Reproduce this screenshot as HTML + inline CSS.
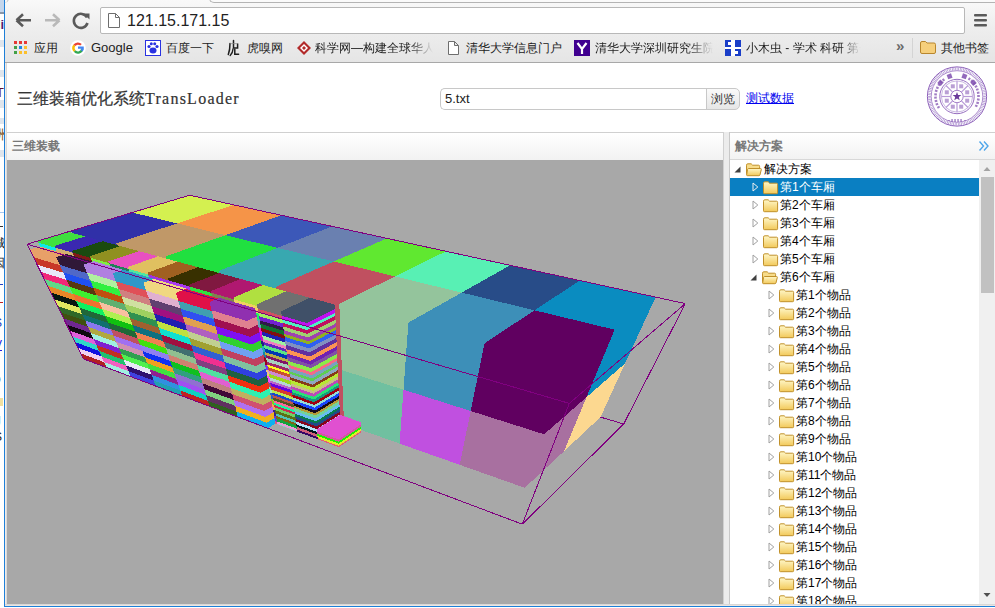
<!DOCTYPE html>
<html><head><meta charset="utf-8">
<style>
*{margin:0;padding:0;box-sizing:border-box}
html,body{width:995px;height:608px;overflow:hidden;background:#fff;font-family:"Liberation Sans",sans-serif;position:relative}
.a{position:absolute}
.bm{position:absolute;top:40px;font-size:12px;color:#222;line-height:16px;white-space:nowrap}
.row{position:absolute;height:18px;white-space:nowrap;font-size:12px;line-height:18px;color:#000}
.row .t{position:absolute;top:0}
.row svg{position:absolute}
</style></head><body>
<!-- background window strip -->
<div class="a" style="left:0;top:0;width:4px;height:608px;background:#fff;overflow:hidden">
<div class="a" style="left:0;top:0;width:4px;height:12px;background:#c4d6ec"></div>
<div class="a" style="left:0;top:12px;width:4px;height:2px;background:#8a97a8"></div>
<div class="a" style="left:0;top:40px;width:4px;height:7px;background:#dfe5ec"></div>
<div class="a" style="left:0;top:70px;width:4px;height:7px;background:#dfe5ec"></div>
<div class="a" style="left:0;top:100px;width:4px;height:8px;background:#dfe5ec"></div>
<div class="a" style="left:0;top:118px;width:4px;height:6px;background:#dfe5ec"></div>
<div class="a" style="left:0;top:150px;width:4px;height:7px;background:#dfe5ec"></div>
<div class="a" style="left:0;top:212px;width:4px;height:1px;background:#a8c8f0"></div>
<div class="a" style="left:-3px;top:18px;font-size:13px;line-height:14px;color:#502070;font-weight:bold">li</div>
<div class="a" style="left:-4px;top:86px;font-size:13px;line-height:14px;color:#601030">T</div>
<div class="a" style="left:-6px;top:128px;font-size:13px;line-height:14px;color:#805010">洲</div>
<div class="a" style="left:-7px;top:236px;font-size:12px;line-height:14px;color:#222">城</div>
<div class="a" style="left:-7px;top:256px;font-size:12px;line-height:14px;color:#222">因</div>
<div class="a" style="left:0;top:226px;width:3px;height:1px;background:#333"></div>
<div class="a" style="left:0;top:284px;width:3px;height:1px;background:#2040c0"></div>
<div class="a" style="left:0;top:302px;width:3px;height:1px;background:#c02020"></div>
<div class="a" style="left:-6px;top:316px;font-size:12px;line-height:14px;color:#2040c0">S</div>
<div class="a" style="left:-6px;top:338px;font-size:12px;line-height:14px;color:#2020e0;text-decoration:underline">V</div>
<div class="a" style="left:-6px;top:372px;font-size:12px;line-height:14px;color:#222">o</div>
<div class="a" style="left:0;top:398px;width:3px;height:8px;background:#f0e0a0"></div>
<div class="a" style="left:-6px;top:412px;font-size:12px;line-height:14px;color:#222">g</div>
<div class="a" style="left:-6px;top:430px;font-size:12px;line-height:14px;color:#222">S</div>
</div>
<div class="a" style="left:4px;top:0;width:1px;height:607px;background:#1e7fd8"></div>
<div class="a" style="left:4px;top:606px;width:991px;height:1px;background:#1e7fd8"></div>
<!-- chrome -->
<div class="a" style="left:5px;top:0;width:990px;height:62px;background:linear-gradient(#f9f9f9,#eeeeee 45%,#e5e5e5)"></div>
<div class="a" style="left:209px;top:-6px;width:800px;height:9px;border-left:1px solid #b4b4b4;border-bottom:1px solid #b4b4b4;border-bottom-left-radius:5px;background:#fafafa"></div>
<div class="a" style="left:3px;top:-6px;width:6px;height:9px;border-right:1px solid #b8b8b8;border-bottom-right-radius:5px"></div>
<svg class="a" style="left:0;top:0" width="995" height="62">
 <!-- back -->
 <path d="M16.5 20.2 L23 14.2 M16.5 20.2 L23 26.2 M17 20.2 H31" stroke="#5a5a5a" stroke-width="2.6" fill="none"/>
 <!-- forward -->
 <path d="M59.5 20.2 L53 14.2 M59.5 20.2 L53 26.2 M59 20.2 H45" stroke="#b9b9b9" stroke-width="2.6" fill="none"/>
 <!-- reload -->
 <path d="M87 17.5 A7 7 0 1 0 87.5 23" stroke="#5a5a5a" stroke-width="2.6" fill="none"/>
 <path d="M83.5 13.5 L89.5 13.5 L89.5 19.5 Z" fill="#5a5a5a"/>
 <!-- menu -->
 <rect x="974" y="14" width="13" height="2.6" rx="1" fill="#5a5a5a"/>
 <rect x="974" y="19" width="13" height="2.6" rx="1" fill="#5a5a5a"/>
 <rect x="974" y="24" width="13" height="2.6" rx="1" fill="#5a5a5a"/>
</svg>
<!-- omnibox -->
<div class="a" style="left:100px;top:7px;width:865px;height:27px;background:#fff;border:1px solid #b8b8b8;border-radius:2px"></div>
<svg class="a" style="left:107px;top:12px" width="14" height="17"><path d="M1.5 1.5 H8.5 L12.5 5.5 V15.5 H1.5 Z M8.5 1.5 V5.5 H12.5" stroke="#6e6e6e" stroke-width="1" fill="#fff"/></svg>
<div class="a" style="left:127px;top:11px;font-size:16px;line-height:19px;color:#222">121.15.171.15</div>
<!-- bookmarks -->
<svg class="a" style="left:13px;top:41px" width="15" height="14">
 <rect x="1" y="0" width="3" height="3" fill="#e53935"/><rect x="6" y="0" width="3" height="3" fill="#e53935"/><rect x="11" y="0" width="3" height="3" fill="#e53935"/>
 <rect x="1" y="5" width="3" height="3" fill="#43a047"/><rect x="6" y="5" width="3" height="3" fill="#1e88e5"/><rect x="11" y="5" width="3" height="3" fill="#fbc02d"/>
 <rect x="1" y="10" width="3" height="3" fill="#43a047"/><rect x="6" y="10" width="3" height="3" fill="#fbc02d"/><rect x="11" y="10" width="3" height="3" fill="#fbc02d"/>
</svg>
<div class="bm" style="left:34px">应用</div>
<svg class="a" style="left:70px;top:40px" width="16" height="16">
 <circle cx="8" cy="8" r="7.8" fill="#fff"/>
 <path d="M12.3 8.6 A4.4 4.4 0 0 1 4.6 11" stroke="#34a853" stroke-width="2.3" fill="none"/>
 <path d="M4.6 11 A4.4 4.4 0 0 1 4.4 5.3" stroke="#fbbc05" stroke-width="2.3" fill="none"/>
 <path d="M4.4 5.3 A4.4 4.4 0 0 1 11 4.8" stroke="#ea4335" stroke-width="2.3" fill="none"/>
 <path d="M8 7.6 H12.6 V9 A4.4 4.4 0 0 1 11.6 10.8" stroke="#4285f4" stroke-width="2.3" fill="none"/>
</svg>
<div class="bm" style="left:91px;font-size:13px">Google</div>
<svg class="a" style="left:145px;top:40px" width="16" height="16">
 <rect x="0.5" y="0.5" width="15" height="15" fill="#fff" stroke="#2932e1"/>
 <ellipse cx="8" cy="10.5" rx="3.5" ry="3" fill="#2932e1"/>
 <circle cx="4" cy="6.5" r="1.6" fill="#2932e1"/><circle cx="12" cy="6.5" r="1.6" fill="#2932e1"/>
 <circle cx="6.3" cy="3.8" r="1.5" fill="#2932e1"/><circle cx="9.7" cy="3.8" r="1.5" fill="#2932e1"/>
</svg>
<div class="bm" style="left:166px">百度一下</div>
<svg class="a" style="left:222px;top:36px" width="24" height="24"><g fill="none" stroke="#1e1e1e" stroke-linecap="round"><path d="M8 7.5 C8 11 7.6 15 6.3 18.5" stroke-width="1.5"/><path d="M11.5 4.5 V12 H15.6 V8" stroke-width="1.5"/><path d="M8.5 7.6 H15.8" stroke-width="0.7" stroke="#888"/><path d="M11 13 C10.8 16 9.8 18 8.2 19.5" stroke-width="1.4"/><path d="M12.8 13.3 V18.2 H16.6" stroke-width="1.5"/></g></svg>
<div class="bm" style="left:247px">虎嗅网</div>
<svg class="a" style="left:296px;top:40px" width="16" height="16">
 <path d="M8 1 L15 8 L8 15 L1 8 Z" fill="#b22a2a"/><path d="M8 4 L12 8 L8 12 L4 8 Z" fill="#fff"/><path d="M8 6 L10 8 L8 10 L6 8 Z" fill="#b22a2a"/>
</svg>
<div class="bm" style="left:315px;width:118px;overflow:hidden;-webkit-mask-image:linear-gradient(90deg,#000 80%,transparent)">科学网—构建全球华人</div>
<svg class="a" style="left:447px;top:40px" width="13" height="16"><path d="M1.5 1.5 H7.5 L11.5 5.5 V14.5 H1.5 Z M7.5 1.5 V5.5 H11.5" stroke="#6e6e6e" stroke-width="1" fill="#fff"/></svg>
<div class="bm" style="left:466px">清华大学信息门户</div>
<svg class="a" style="left:574px;top:40px" width="16" height="16"><rect width="16" height="16" fill="#400090"/><path d="M3.5 3 L8 9 L12.5 3 M8 9 V14" stroke="#fff" stroke-width="2.2" fill="none"/></svg>
<div class="bm" style="left:595px;width:118px;overflow:hidden;-webkit-mask-image:linear-gradient(90deg,#000 80%,transparent)">清华大学深圳研究生院</div>
<svg class="a" style="left:725px;top:40px" width="16" height="16"><rect width="16" height="16" fill="#fff"/><rect x="0" y="0" width="16" height="7" fill="#1a3ec8"/><rect x="0" y="9" width="16" height="7" fill="#1a3ec8"/><rect x="6" y="0" width="4" height="16" fill="#fff"/><rect x="3" y="2" width="3" height="3" fill="#fff"/><rect x="10" y="11" width="3" height="3" fill="#fff"/></svg>
<div class="bm" style="left:746px;width:115px;overflow:hidden;-webkit-mask-image:linear-gradient(90deg,#000 82%,transparent)">小木虫 - 学术 科研 第一站</div>
<div class="bm" style="left:896px;top:38px;font-size:15px;color:#6a6a6a;font-weight:bold">»</div>
<div class="a" style="left:912px;top:38px;width:1px;height:20px;background:#d4d4d4"></div>
<svg class="a" style="left:920px;top:41px" width="16" height="13"><path d="M0.5 2 Q0.5 0.5 2 0.5 H5.5 L7 2 H14 Q15.5 2 15.5 3.5 V11 Q15.5 12.5 14 12.5 H2 Q0.5 12.5 0.5 11 Z" fill="#f6cf7c" stroke="#b8862e"/></svg>
<div class="bm" style="left:941px">其他书签</div>
<div class="a" style="left:5px;top:62px;width:990px;height:1px;background:#a8a8a8"></div>
<!-- page -->
<div class="a" style="left:5px;top:63px;width:1px;height:543px;background:#f0ebe6"></div>
<div class="a" style="left:6px;top:63px;width:1px;height:543px;background:#d9d9d9"></div>
<div class="a" style="left:17px;top:90px;font-size:16px;line-height:18px;color:#333;white-space:nowrap;-webkit-text-stroke:0.2px #333">三维装箱优化系统<span style="font-family:'Liberation Serif',serif;font-size:16px;letter-spacing:1.25px">TransLoader</span></div>
<div class="a" style="left:440px;top:88px;width:267px;height:22px;border:1px solid #c8c8c8;border-right:none;border-radius:5px 0 0 5px;background:#fff"></div>
<div class="a" style="left:445px;top:91px;font-size:13px;line-height:16px;color:#222">5.txt</div>
<div class="a" style="left:706px;top:88px;width:34px;height:22px;border:1px solid #c8c8c8;border-radius:0 5px 5px 0;background:linear-gradient(#fafafa,#e6e6e6)"></div>
<div class="a" style="left:711px;top:91px;font-size:12px;line-height:16px;color:#333">浏览</div>
<div class="a" style="left:746px;top:90px;font-size:12px;line-height:16px;color:#0000ee;text-decoration:underline">测试数据</div>
<!-- logo -->
<svg class="a" style="left:925px;top:65px" width="64" height="64"><g fill="none" stroke="#8a5cb8"><circle cx="32" cy="31.5" r="29.6" stroke-width="1"/><circle cx="32" cy="31.5" r="27.6" stroke-width="2.6" stroke-dasharray="0.7 0.9" stroke="#a688cc"/><circle cx="32" cy="31.5" r="25.8" stroke-width="0.7"/><circle cx="32" cy="31.5" r="17.2" stroke-width="0.9"/><circle cx="32" cy="31.5" r="15.6" stroke-width="0.6" stroke="#a688cc"/><circle cx="32" cy="31.5" r="6.2" stroke-width="0.8"/><line x1="38.2" y1="31.5" x2="47.6" y2="31.5" stroke-width="1.2" stroke="#b89ad8"/><line x1="36.4" y1="35.9" x2="43.0" y2="42.5" stroke-width="1.2" stroke="#b89ad8"/><line x1="32.0" y1="37.7" x2="32.0" y2="47.1" stroke-width="1.2" stroke="#b89ad8"/><line x1="27.6" y1="35.9" x2="21.0" y2="42.5" stroke-width="1.2" stroke="#b89ad8"/><line x1="25.8" y1="31.5" x2="16.4" y2="31.5" stroke-width="1.2" stroke="#b89ad8"/><line x1="27.6" y1="27.1" x2="21.0" y2="20.5" stroke-width="1.2" stroke="#b89ad8"/><line x1="32.0" y1="25.3" x2="32.0" y2="15.9" stroke-width="1.2" stroke="#b89ad8"/><line x1="36.4" y1="27.1" x2="43.0" y2="20.5" stroke-width="1.2" stroke="#b89ad8"/></g><g fill="#8050b0"><rect x="13.2" y="15.4" width="4.6" height="4.6" transform="rotate(-50 15.5 17.7)" opacity="0.85"/><rect x="22.3" y="9.0" width="4.6" height="4.6" transform="rotate(-20 24.6 11.3)" opacity="0.85"/><rect x="37.1" y="9.0" width="4.6" height="4.6" transform="rotate(20 39.4 11.3)" opacity="0.85"/><rect x="46.2" y="15.4" width="4.6" height="4.6" transform="rotate(50 48.5 17.7)" opacity="0.85"/><rect x="12.4" y="41.0" width="2" height="2.6" transform="rotate(240 13.4 42.2)" opacity="0.75"/><rect x="10.9" y="37.9" width="2" height="2.6" transform="rotate(249 11.9 39.2)" opacity="0.75"/><rect x="10.0" y="34.7" width="2" height="2.6" transform="rotate(258 11.0 36.0)" opacity="0.75"/><rect x="9.5" y="31.3" width="2" height="2.6" transform="rotate(267 10.5 32.6)" opacity="0.75"/><rect x="9.6" y="28.0" width="2" height="2.6" transform="rotate(276 10.6 29.3)" opacity="0.75"/><rect x="10.2" y="24.6" width="2" height="2.6" transform="rotate(285 11.2 25.9)" opacity="0.75"/><rect x="11.4" y="21.5" width="2" height="2.6" transform="rotate(294 12.4 22.8)" opacity="0.75"/><rect x="13.0" y="18.5" width="2" height="2.6" transform="rotate(303 14.0 19.8)" opacity="0.75"/><rect x="15.0" y="15.8" width="2" height="2.6" transform="rotate(312 16.0 17.1)" opacity="0.75"/><rect x="17.5" y="13.5" width="2" height="2.6" transform="rotate(321 18.5 14.8)" opacity="0.75"/><rect x="43.3" y="12.6" width="2" height="2.6" transform="rotate(35 44.3 13.9)" opacity="0.75"/><rect x="45.9" y="14.7" width="2" height="2.6" transform="rotate(44 46.9 16.0)" opacity="0.75"/><rect x="48.2" y="17.3" width="2" height="2.6" transform="rotate(53 49.2 18.6)" opacity="0.75"/><rect x="50.0" y="20.1" width="2" height="2.6" transform="rotate(62 51.0 21.4)" opacity="0.75"/><rect x="51.3" y="23.2" width="2" height="2.6" transform="rotate(71 52.3 24.5)" opacity="0.75"/><rect x="52.2" y="26.5" width="2" height="2.6" transform="rotate(80 53.2 27.8)" opacity="0.75"/><rect x="52.5" y="29.8" width="2" height="2.6" transform="rotate(89 53.5 31.1)" opacity="0.75"/><rect x="52.3" y="33.2" width="2" height="2.6" transform="rotate(98 53.3 34.5)" opacity="0.75"/><rect x="51.6" y="36.5" width="2" height="2.6" transform="rotate(107 52.6 37.8)" opacity="0.75"/><rect x="50.3" y="39.6" width="2" height="2.6" transform="rotate(116 51.3 40.9)" opacity="0.75"/><rect x="26.4" y="54.0" width="1.3" height="3" opacity="0.8"/><rect x="29.4" y="54.0" width="1.3" height="3" opacity="0.8"/><rect x="32.4" y="54.0" width="1.3" height="3" opacity="0.8"/><rect x="35.4" y="54.0" width="1.3" height="3" opacity="0.8"/><rect x="23.0" y="55.0" width="2" height="0.8" opacity="0.7"/><rect x="39.0" y="55.0" width="2" height="0.8" opacity="0.7"/><rect x="40.2" y="33.7" width="4" height="4" opacity="0.55"/><rect x="34.2" y="39.7" width="4" height="4" opacity="0.55"/><rect x="25.8" y="39.7" width="4" height="4" opacity="0.55"/><rect x="19.8" y="33.7" width="4" height="4" opacity="0.55"/><rect x="19.8" y="25.3" width="4" height="4" opacity="0.55"/><rect x="25.8" y="19.3" width="4" height="4" opacity="0.55"/><rect x="34.2" y="19.3" width="4" height="4" opacity="0.55"/><rect x="40.2" y="25.3" width="4" height="4" opacity="0.55"/><polygon points="32.0,26.9 33.1,30.0 36.4,30.1 33.8,32.1 34.7,35.2 32.0,33.4 29.3,35.2 30.2,32.1 27.6,30.1 30.9,30.0" fill="#6a3a9a"/></g></svg>
<!-- panel headers -->
<div class="a" style="left:7px;top:132px;width:716px;height:28px;border-top:1px solid #d0d0d0;background:linear-gradient(#ffffff,#f2f2f2)"></div>
<div class="a" style="left:12px;top:139px;font-size:12px;line-height:14px;color:#777;font-weight:bold">三维装载</div>
<div class="a" style="left:723px;top:132px;width:1px;height:474px;background:#d0d0d0"></div>
<div class="a" style="left:724px;top:132px;width:5px;height:474px;background:#ececec"></div>
<div class="a" style="left:729px;top:132px;width:1px;height:474px;background:#c8c8c8"></div>
<div class="a" style="left:730px;top:132px;width:265px;height:28px;border-top:1px solid #d0d0d0;border-bottom:1px solid #d8d8d8;background:linear-gradient(#ffffff,#f2f2f2)"></div>
<div class="a" style="left:735px;top:139px;font-size:12px;line-height:14px;color:#777;font-weight:bold">解决方案</div>
<svg class="a" style="left:978px;top:140px" width="12" height="12"><path d="M1.5 1.5 L5.5 6 L1.5 10.5 M6 1.5 L10 6 L6 10.5" stroke="#4ea6ea" stroke-width="1.4" fill="none"/></svg>
<!-- canvas -->
<!--scene--><svg class="a" style="left:7px;top:160px" width="716" height="444" viewBox="0 0 716 444" shape-rendering="crispEdges">
<rect width="716" height="444" fill="#a8a8a8"/>
<line x1="208.1" y1="142.9" x2="616.7" y2="264.0" stroke="#800080" stroke-width="1"/>
<line x1="208.1" y1="142.9" x2="182.6" y2="35.2" stroke="#800080" stroke-width="1"/>
<line x1="208.1" y1="142.9" x2="76.4" y2="198.8" stroke="#800080" stroke-width="1"/>
<polygon points="125.2,52.5 170.1,63.4 199.7,175.5 160.8,163.0" fill="#d4f050"/>
<polygon points="226.8,44.9 170.1,63.4 199.7,175.5 246.4,154.2" fill="#d4f050"/>
<polygon points="182.6,35.2 226.8,44.9 170.1,63.4 125.2,52.5" fill="#d4f050"/>
<polygon points="170.1,63.4 218.4,75.2 241.1,188.9 199.7,175.5" fill="#f59448"/>
<polygon points="274.2,55.3 218.4,75.2 241.1,188.9 287.1,166.3" fill="#f59448"/>
<polygon points="226.8,44.9 274.2,55.3 218.4,75.2 170.1,63.4" fill="#f59448"/>
<polygon points="218.4,75.2 270.5,87.8 285.1,203.2 241.1,188.9" fill="#3c58b8"/>
<polygon points="325.1,66.4 270.5,87.8 285.1,203.2 330.2,179.1" fill="#3c58b8"/>
<polygon points="274.2,55.3 325.1,66.4 270.5,87.8 218.4,75.2" fill="#3c58b8"/>
<polygon points="270.5,87.8 326.8,101.5 332.1,218.4 285.1,203.2" fill="#6a80b0"/>
<polygon points="379.9,78.4 326.8,101.5 332.1,218.4 376.1,192.7" fill="#6a80b0"/>
<polygon points="325.1,66.4 379.9,78.4 326.8,101.5 270.5,87.8" fill="#6a80b0"/>
<polygon points="326.8,101.5 388.0,116.4 382.5,234.6 332.1,218.4" fill="#60e830"/>
<polygon points="439.0,91.3 388.0,116.4 382.5,234.6 425.1,207.2" fill="#60e830"/>
<polygon points="379.9,78.4 439.0,91.3 388.0,116.4 326.8,101.5" fill="#60e830"/>
<polygon points="388.0,116.4 454.7,132.6 436.4,252.1 382.5,234.6" fill="#58f0b4"/>
<polygon points="503.1,105.3 454.7,132.6 436.4,252.1 477.4,222.7" fill="#58f0b4"/>
<polygon points="439.0,91.3 503.1,105.3 454.7,132.6 388.0,116.4" fill="#58f0b4"/>
<polygon points="454.7,132.6 527.5,150.3 494.5,270.8 436.4,252.1" fill="#284c88"/>
<polygon points="572.7,120.6 527.5,150.3 494.5,270.8 533.4,239.3" fill="#284c88"/>
<polygon points="503.1,105.3 572.7,120.6 527.5,150.3 454.7,132.6" fill="#284c88"/>
<polygon points="509.2,217.1 579.5,237.2 557.1,291.1 494.5,270.8" fill="#fcd890"/>
<polygon points="618.1,203.4 579.5,237.2 557.1,291.1 593.5,257.1" fill="#fcd890"/>
<polygon points="551.0,185.9 618.1,203.4 579.5,237.2 509.2,217.1" fill="#fcd890"/>
<polygon points="527.5,150.3 607.6,169.7 579.5,237.2 509.2,217.1" fill="#0a8cc0"/>
<polygon points="648.6,137.2 607.6,169.7 579.5,237.2 618.1,203.4" fill="#0a8cc0"/>
<polygon points="572.7,120.6 648.6,137.2 607.6,169.7 527.5,150.3" fill="#0a8cc0"/>
<polygon points="63.9,71.0 109.3,83.3 150.6,197.9 111.3,184.0" fill="#3030a8"/>
<polygon points="170.1,63.4 109.3,83.3 150.6,197.9 199.7,175.5" fill="#3030a8"/>
<polygon points="125.2,52.5 170.1,63.4 109.3,83.3 63.9,71.0" fill="#3030a8"/>
<polygon points="109.3,83.3 158.3,96.6 192.6,212.8 150.6,197.9" fill="#c09868"/>
<polygon points="218.4,75.2 158.3,96.6 192.6,212.8 241.1,188.9" fill="#c09868"/>
<polygon points="170.1,63.4 218.4,75.2 158.3,96.6 109.3,83.3" fill="#c09868"/>
<polygon points="158.3,96.6 211.4,111.0 237.4,228.6 192.6,212.8" fill="#20e040"/>
<polygon points="270.5,87.8 211.4,111.0 237.4,228.6 285.1,203.2" fill="#20e040"/>
<polygon points="218.4,75.2 270.5,87.8 211.4,111.0 158.3,96.6" fill="#20e040"/>
<polygon points="211.4,111.0 269.2,126.7 285.4,245.6 237.4,228.6" fill="#38a8b0"/>
<polygon points="326.8,101.5 269.2,126.7 285.4,245.6 332.1,218.4" fill="#38a8b0"/>
<polygon points="270.5,87.8 326.8,101.5 269.2,126.7 211.4,111.0" fill="#38a8b0"/>
<polygon points="269.2,126.7 332.3,143.8 337.0,263.9 285.4,245.6" fill="#c05060"/>
<polygon points="388.0,116.4 332.3,143.8 337.0,263.9 382.5,234.6" fill="#c05060"/>
<polygon points="326.8,101.5 388.0,116.4 332.3,143.8 269.2,126.7" fill="#c05060"/>
<polygon points="334.9,210.2 396.5,229.7 392.6,283.6 337.0,263.9" fill="#70c0a0"/>
<polygon points="444.6,198.5 396.5,229.7 392.6,283.6 436.4,252.1" fill="#70c0a0"/>
<polygon points="385.0,181.4 444.6,198.5 396.5,229.7 334.9,210.2" fill="#70c0a0"/>
<polygon points="332.3,143.8 401.4,162.6 396.5,229.7 334.9,210.2" fill="#94c49c"/>
<polygon points="454.7,132.6 401.4,162.6 396.5,229.7 444.6,198.5" fill="#94c49c"/>
<polygon points="388.0,116.4 454.7,132.6 401.4,162.6 332.3,143.8" fill="#94c49c"/>
<polygon points="396.5,229.7 463.7,251.0 452.7,304.8 392.6,283.6" fill="#c050e0"/>
<polygon points="509.2,217.1 463.7,251.0 452.7,304.8 494.5,270.8" fill="#c050e0"/>
<polygon points="444.6,198.5 509.2,217.1 463.7,251.0 396.5,229.7" fill="#c050e0"/>
<polygon points="401.4,162.6 477.6,183.2 463.7,251.0 396.5,229.7" fill="#3d8fb8"/>
<polygon points="527.5,150.3 477.6,183.2 463.7,251.0 509.2,217.1" fill="#3d8fb8"/>
<polygon points="454.7,132.6 527.5,150.3 477.6,183.2 401.4,162.6" fill="#3d8fb8"/>
<polygon points="463.7,251.0 537.1,274.3 517.7,327.8 452.7,304.8" fill="#a870a0"/>
<polygon points="579.5,237.2 537.1,274.3 517.7,327.8 557.1,291.1" fill="#a870a0"/>
<polygon points="509.2,217.1 579.5,237.2 537.1,274.3 463.7,251.0" fill="#a870a0"/>
<polygon points="477.6,183.2 561.8,206.1 537.1,274.3 463.7,251.0" fill="#600060"/>
<polygon points="607.6,169.7 561.8,206.1 537.1,274.3 579.5,237.2" fill="#600060"/>
<polygon points="527.5,150.3 607.6,169.7 561.8,206.1 477.6,183.2" fill="#600060"/>
<polygon points="30.5,81.0 47.4,85.9 48.2,87.6 31.3,82.7" fill="#40e040"/>
<polygon points="78.1,76.4 47.4,85.9 48.2,87.6 78.7,78.1" fill="#40e040"/>
<polygon points="31.3,82.7 48.2,87.6 51.1,94.1 34.3,89.2" fill="#10e8e8"/>
<polygon points="78.7,78.1 48.2,87.6 51.1,94.1 81.3,84.5" fill="#10e8e8"/>
<polygon points="34.3,89.2 51.1,94.1 54.3,101.2 37.6,96.2" fill="#a54dca"/>
<polygon points="81.3,84.5 51.1,94.1 54.3,101.2 84.1,91.5" fill="#a54dca"/>
<polygon points="37.6,96.2 54.3,101.2 56.8,106.6 40.2,101.6" fill="#30bb1d"/>
<polygon points="84.1,91.5 54.3,101.2 56.8,106.6 86.3,96.8" fill="#30bb1d"/>
<polygon points="40.2,101.6 56.8,106.6 60.2,114.1 43.7,109.0" fill="#6d132c"/>
<polygon points="86.3,96.8 56.8,106.6 60.2,114.1 89.2,104.2" fill="#6d132c"/>
<polygon points="43.7,109.0 60.2,114.1 62.9,120.2 46.6,115.1" fill="#237b2e"/>
<polygon points="89.2,104.2 60.2,114.1 62.9,120.2 91.7,110.3" fill="#237b2e"/>
<polygon points="46.6,115.1 62.9,120.2 65.8,126.5 49.6,121.3" fill="#1e3f72"/>
<polygon points="91.7,110.3 62.9,120.2 65.8,126.5 94.2,116.5" fill="#1e3f72"/>
<polygon points="49.6,121.3 65.8,126.5 68.7,132.9 52.6,127.7" fill="#1fcb19"/>
<polygon points="94.2,116.5 65.8,126.5 68.7,132.9 96.7,122.8" fill="#1fcb19"/>
<polygon points="52.6,127.7 68.7,132.9 71.9,139.9 55.9,134.7" fill="#174494"/>
<polygon points="96.7,122.8 68.7,132.9 71.9,139.9 99.5,129.8" fill="#174494"/>
<polygon points="55.9,134.7 71.9,139.9 74.4,145.5 58.5,140.3" fill="#3c9d5c"/>
<polygon points="99.5,129.8 71.9,139.9 74.4,145.5 101.7,135.3" fill="#3c9d5c"/>
<polygon points="58.5,140.3 74.4,145.5 76.6,150.4 60.8,145.1" fill="#60be31"/>
<polygon points="101.7,135.3 74.4,145.5 76.6,150.4 103.6,140.1" fill="#60be31"/>
<polygon points="60.8,145.1 76.6,150.4 79.2,156.1 63.5,150.7" fill="#201e69"/>
<polygon points="103.6,140.1 76.6,150.4 79.2,156.1 105.9,145.8" fill="#201e69"/>
<polygon points="63.5,150.7 79.2,156.1 81.6,161.6 66.1,156.2" fill="#daa0ee"/>
<polygon points="105.9,145.8 79.2,156.1 81.6,161.6 108.1,151.2" fill="#daa0ee"/>
<polygon points="66.1,156.2 81.6,161.6 84.2,167.2 68.7,161.8" fill="#e8b999"/>
<polygon points="108.1,151.2 81.6,161.6 84.2,167.2 110.3,156.8" fill="#e8b999"/>
<polygon points="68.7,161.8 84.2,167.2 86.3,172.0 71.0,166.6" fill="#5c7c29"/>
<polygon points="110.3,156.8 84.2,167.2 86.3,172.0 112.3,161.5" fill="#5c7c29"/>
<polygon points="71.0,166.6 86.3,172.0 88.8,177.4 73.5,171.9" fill="#fdafe5"/>
<polygon points="112.3,161.5 86.3,172.0 88.8,177.4 114.4,166.9" fill="#fdafe5"/>
<polygon points="73.5,171.9 88.8,177.4 90.9,182.1 75.7,176.6" fill="#253cd6"/>
<polygon points="114.4,166.9 88.8,177.4 90.9,182.1 116.3,171.5" fill="#253cd6"/>
<polygon points="75.7,176.6 90.9,182.1 92.9,186.4 77.8,181.0" fill="#af4dfa"/>
<polygon points="116.3,171.5 90.9,182.1 92.9,186.4 118.0,175.9" fill="#af4dfa"/>
<polygon points="77.8,181.0 92.9,186.4 95.1,191.3 80.1,185.8" fill="#27a0ae"/>
<polygon points="118.0,175.9 92.9,186.4 95.1,191.3 120.0,180.7" fill="#27a0ae"/>
<polygon points="80.1,185.8 95.1,191.3 97.5,196.6 82.6,191.1" fill="#fee923"/>
<polygon points="120.0,180.7 95.1,191.3 97.5,196.6 122.1,185.9" fill="#fee923"/>
<polygon points="82.6,191.1 97.5,196.6 99.4,200.9 84.6,195.4" fill="#8af221"/>
<polygon points="122.1,185.9 97.5,196.6 99.4,200.9 123.8,190.2" fill="#8af221"/>
<polygon points="61.1,71.8 78.1,76.4 47.4,85.9 30.5,81.0" fill="#40e040"/>
<polygon points="47.4,85.9 64.9,91.0 65.6,92.6 48.2,87.6" fill="#3a28b0"/>
<polygon points="95.5,81.2 64.9,91.0 65.6,92.6 96.1,82.8" fill="#3a28b0"/>
<polygon points="48.2,87.6 65.6,92.6 68.5,99.2 51.1,94.1" fill="#d0b070"/>
<polygon points="96.1,82.8 65.6,92.6 68.5,99.2 98.6,89.3" fill="#d0b070"/>
<polygon points="51.1,94.1 68.5,99.2 71.1,105.4 53.9,100.2" fill="#1f9ee4"/>
<polygon points="98.6,89.3 68.5,99.2 71.1,105.4 100.9,95.4" fill="#1f9ee4"/>
<polygon points="53.9,100.2 71.1,105.4 73.8,111.7 56.7,106.5" fill="#b10bec"/>
<polygon points="100.9,95.4 71.1,105.4 73.8,111.7 103.2,101.6" fill="#b10bec"/>
<polygon points="56.7,106.5 73.8,111.7 76.4,117.8 59.5,112.6" fill="#3bfc1e"/>
<polygon points="103.2,101.6 73.8,111.7 76.4,117.8 105.5,107.6" fill="#3bfc1e"/>
<polygon points="59.5,112.6 76.4,117.8 78.9,123.4 62.0,118.2" fill="#93427e"/>
<polygon points="105.5,107.6 76.4,117.8 78.9,123.4 107.6,113.2" fill="#93427e"/>
<polygon points="62.0,118.2 78.9,123.4 81.4,129.4 64.7,124.1" fill="#fe2955"/>
<polygon points="107.6,113.2 78.9,123.4 81.4,129.4 109.9,119.1" fill="#fe2955"/>
<polygon points="64.7,124.1 81.4,129.4 84.0,135.4 67.4,130.1" fill="#8e46dc"/>
<polygon points="109.9,119.1 81.4,129.4 84.0,135.4 112.2,125.1" fill="#8e46dc"/>
<polygon points="67.4,130.1 84.0,135.4 87.0,142.3 70.5,136.9" fill="#8ed4b7"/>
<polygon points="112.2,125.1 84.0,135.4 87.0,142.3 114.7,131.9" fill="#8ed4b7"/>
<polygon points="70.5,136.9 87.0,142.3 89.7,148.6 73.3,143.2" fill="#c2764d"/>
<polygon points="114.7,131.9 87.0,142.3 89.7,148.6 117.1,138.2" fill="#c2764d"/>
<polygon points="73.3,143.2 89.7,148.6 91.8,153.5 75.5,148.0" fill="#4d7677"/>
<polygon points="117.1,138.2 89.7,148.6 91.8,153.5 118.9,142.9" fill="#4d7677"/>
<polygon points="75.5,148.0 91.8,153.5 93.7,158.0 77.6,152.6" fill="#5d8690"/>
<polygon points="118.9,142.9 91.8,153.5 93.7,158.0 120.6,147.5" fill="#5d8690"/>
<polygon points="77.6,152.6 93.7,158.0 95.7,162.5 79.6,157.1" fill="#d6bda3"/>
<polygon points="120.6,147.5 93.7,158.0 95.7,162.5 122.3,151.9" fill="#d6bda3"/>
<polygon points="79.6,157.1 95.7,162.5 98.5,169.0 82.5,163.5" fill="#1be9c8"/>
<polygon points="122.3,151.9 95.7,162.5 98.5,169.0 124.8,158.4" fill="#1be9c8"/>
<polygon points="82.5,163.5 98.5,169.0 100.7,174.2 84.9,168.7" fill="#c935f6"/>
<polygon points="124.8,158.4 98.5,169.0 100.7,174.2 126.7,163.5" fill="#c935f6"/>
<polygon points="84.9,168.7 100.7,174.2 103.1,179.8 87.4,174.3" fill="#1f6122"/>
<polygon points="126.7,163.5 100.7,174.2 103.1,179.8 128.8,169.1" fill="#1f6122"/>
<polygon points="87.4,174.3 103.1,179.8 105.8,186.0 90.2,180.5" fill="#e15338"/>
<polygon points="128.8,169.1 103.1,179.8 105.8,186.0 131.2,175.2" fill="#e15338"/>
<polygon points="90.2,180.5 105.8,186.0 107.8,190.8 92.3,185.2" fill="#1a3400"/>
<polygon points="131.2,175.2 105.8,186.0 107.8,190.8 133.0,180.0" fill="#1a3400"/>
<polygon points="92.3,185.2 107.8,190.8 110.1,196.0 94.7,190.4" fill="#33ba0d"/>
<polygon points="133.0,180.0 107.8,190.8 110.1,196.0 134.9,185.1" fill="#33ba0d"/>
<polygon points="94.7,190.4 110.1,196.0 111.8,200.1 96.5,194.4" fill="#6ac04c"/>
<polygon points="134.9,185.1 110.1,196.0 111.8,200.1 136.5,189.2" fill="#6ac04c"/>
<polygon points="96.5,194.4 111.8,200.1 114.0,205.2 98.8,199.5" fill="#b1baf2"/>
<polygon points="136.5,189.2 111.8,200.1 114.0,205.2 138.4,194.3" fill="#b1baf2"/>
<polygon points="98.8,199.5 114.0,205.2 114.6,206.5 99.4,200.9" fill="#f9eef5"/>
<polygon points="138.4,194.3 114.0,205.2 114.6,206.5 138.9,195.6" fill="#f9eef5"/>
<polygon points="78.1,76.4 95.5,81.2 64.9,91.0 47.4,85.9" fill="#3a28b0"/>
<polygon points="64.9,91.0 82.9,96.2 83.6,97.9 65.6,92.6" fill="#1a4a10"/>
<polygon points="113.5,86.1 82.9,96.2 83.6,97.9 114.0,87.7" fill="#1a4a10"/>
<polygon points="65.6,92.6 83.6,97.9 86.3,104.5 68.5,99.2" fill="#801818"/>
<polygon points="114.0,87.7 83.6,97.9 86.3,104.5 116.4,94.3" fill="#801818"/>
<polygon points="68.5,99.2 86.3,104.5 88.7,110.3 71.0,105.0" fill="#f79f2b"/>
<polygon points="116.4,94.3 86.3,104.5 88.7,110.3 118.4,100.0" fill="#f79f2b"/>
<polygon points="71.0,105.0 88.7,110.3 91.7,117.6 74.1,112.3" fill="#87f552"/>
<polygon points="118.4,100.0 88.7,110.3 91.7,117.6 121.0,107.2" fill="#87f552"/>
<polygon points="74.1,112.3 91.7,117.6 94.3,124.2 76.9,118.8" fill="#69b94b"/>
<polygon points="121.0,107.2 91.7,117.6 94.3,124.2 123.3,113.7" fill="#69b94b"/>
<polygon points="76.9,118.8 94.3,124.2 97.1,131.0 79.8,125.6" fill="#0d982e"/>
<polygon points="123.3,113.7 94.3,124.2 97.1,131.0 125.7,120.5" fill="#0d982e"/>
<polygon points="79.8,125.6 97.1,131.0 99.8,137.7 82.7,132.3" fill="#85bb55"/>
<polygon points="125.7,120.5 97.1,131.0 99.8,137.7 128.1,127.1" fill="#85bb55"/>
<polygon points="82.7,132.3 99.8,137.7 102.2,143.5 85.1,138.0" fill="#72a872"/>
<polygon points="128.1,127.1 99.8,137.7 102.2,143.5 130.1,132.8" fill="#72a872"/>
<polygon points="85.1,138.0 102.2,143.5 104.7,149.8 87.8,144.2" fill="#637acd"/>
<polygon points="130.1,132.8 102.2,143.5 104.7,149.8 132.3,139.0" fill="#637acd"/>
<polygon points="87.8,144.2 104.7,149.8 107.4,156.2 90.6,150.6" fill="#7466fc"/>
<polygon points="132.3,139.0 104.7,149.8 107.4,156.2 134.6,145.4" fill="#7466fc"/>
<polygon points="90.6,150.6 107.4,156.2 109.6,161.7 92.9,156.1" fill="#0e0e8f"/>
<polygon points="134.6,145.4 107.4,156.2 109.6,161.7 136.5,150.8" fill="#0e0e8f"/>
<polygon points="92.9,156.1 109.6,161.7 111.8,167.3 95.3,161.6" fill="#63b0e4"/>
<polygon points="136.5,150.8 109.6,161.7 111.8,167.3 138.5,156.4" fill="#63b0e4"/>
<polygon points="95.3,161.6 111.8,167.3 114.4,173.5 98.0,167.8" fill="#b2ba29"/>
<polygon points="138.5,156.4 111.8,167.3 114.4,173.5 140.7,162.6" fill="#b2ba29"/>
<polygon points="98.0,167.8 114.4,173.5 116.3,178.3 100.0,172.7" fill="#74f064"/>
<polygon points="140.7,162.6 114.4,173.5 116.3,178.3 142.4,167.4" fill="#74f064"/>
<polygon points="100.0,172.7 116.3,178.3 118.4,183.3 102.2,177.7" fill="#f700f5"/>
<polygon points="142.4,167.4 116.3,178.3 118.4,183.3 144.2,172.3" fill="#f700f5"/>
<polygon points="102.2,177.7 118.4,183.3 120.9,189.5 104.8,183.8" fill="#b02b3d"/>
<polygon points="144.2,172.3 118.4,183.3 120.9,189.5 146.3,178.4" fill="#b02b3d"/>
<polygon points="104.8,183.8 120.9,189.5 123.3,195.5 107.4,189.7" fill="#66f45b"/>
<polygon points="146.3,178.4 120.9,189.5 123.3,195.5 148.4,184.4" fill="#66f45b"/>
<polygon points="107.4,189.7 123.3,195.5 125.3,200.4 109.5,194.6" fill="#aa2cca"/>
<polygon points="148.4,184.4 123.3,195.5 125.3,200.4 150.2,189.3" fill="#aa2cca"/>
<polygon points="109.5,194.6 125.3,200.4 127.3,205.3 111.6,199.5" fill="#2b5157"/>
<polygon points="150.2,189.3 125.3,200.4 127.3,205.3 151.9,194.1" fill="#2b5157"/>
<polygon points="111.6,199.5 127.3,205.3 129.7,211.1 114.1,205.3" fill="#0e4dee"/>
<polygon points="151.9,194.1 127.3,205.3 129.7,211.1 154.0,199.9" fill="#0e4dee"/>
<polygon points="114.1,205.3 129.7,211.1 130.1,212.3 114.6,206.5" fill="#4af2b3"/>
<polygon points="154.0,199.9 129.7,211.1 130.1,212.3 154.4,201.1" fill="#4af2b3"/>
<polygon points="95.5,81.2 113.5,86.1 82.9,96.2 64.9,91.0" fill="#1a4a10"/>
<polygon points="82.9,96.2 101.5,101.5 102.2,103.2 83.6,97.9" fill="#909020"/>
<polygon points="132.0,91.1 101.5,101.5 102.2,103.2 132.5,92.8" fill="#909020"/>
<polygon points="83.6,97.9 102.2,103.2 104.7,109.9 86.3,104.5" fill="#80f040"/>
<polygon points="132.5,92.8 102.2,103.2 104.7,109.9 134.7,99.4" fill="#80f040"/>
<polygon points="86.3,104.5 104.7,109.9 106.8,115.4 88.5,109.9" fill="#4f430a"/>
<polygon points="134.7,99.4 104.7,109.9 106.8,115.4 136.5,104.8" fill="#4f430a"/>
<polygon points="88.5,109.9 106.8,115.4 109.9,123.4 91.8,117.8" fill="#3447de"/>
<polygon points="136.5,104.8 106.8,115.4 109.9,123.4 139.1,112.7" fill="#3447de"/>
<polygon points="91.8,117.8 109.9,123.4 112.8,131.2 94.9,125.6" fill="#636c0e"/>
<polygon points="139.1,112.7 109.9,123.4 112.8,131.2 141.6,120.4" fill="#636c0e"/>
<polygon points="94.9,125.6 112.8,131.2 115.0,136.9 97.2,131.3" fill="#957ba6"/>
<polygon points="141.6,120.4 112.8,131.2 115.0,136.9 143.5,126.1" fill="#957ba6"/>
<polygon points="97.2,131.3 115.0,136.9 117.2,142.6 99.5,137.0" fill="#d6431f"/>
<polygon points="143.5,126.1 115.0,136.9 117.2,142.6 145.4,131.7" fill="#d6431f"/>
<polygon points="99.5,137.0 117.2,142.6 119.9,149.8 102.4,144.1" fill="#b5ead7"/>
<polygon points="145.4,131.7 117.2,142.6 119.9,149.8 147.7,138.8" fill="#b5ead7"/>
<polygon points="102.4,144.1 119.9,149.8 122.5,156.6 105.2,150.9" fill="#424d09"/>
<polygon points="147.7,138.8 119.9,149.8 122.5,156.6 150.0,145.5" fill="#424d09"/>
<polygon points="105.2,150.9 122.5,156.6 125.1,163.3 107.9,157.6" fill="#5d024c"/>
<polygon points="150.0,145.5 122.5,156.6 125.1,163.3 152.2,152.2" fill="#5d024c"/>
<polygon points="107.9,157.6 125.1,163.3 127.0,168.3 109.9,162.6" fill="#f23d1f"/>
<polygon points="152.2,152.2 125.1,163.3 127.0,168.3 153.8,157.2" fill="#f23d1f"/>
<polygon points="109.9,162.6 127.0,168.3 129.1,173.6 112.1,167.8" fill="#f7361d"/>
<polygon points="153.8,157.2 127.0,168.3 129.1,173.6 155.6,162.4" fill="#f7361d"/>
<polygon points="112.1,167.8 129.1,173.6 131.0,178.6 114.1,172.8" fill="#8d1532"/>
<polygon points="155.6,162.4 129.1,173.6 131.0,178.6 157.2,167.4" fill="#8d1532"/>
<polygon points="114.1,172.8 131.0,178.6 133.1,184.1 116.3,178.3" fill="#0e20e2"/>
<polygon points="157.2,167.4 131.0,178.6 133.1,184.1 159.0,172.9" fill="#0e20e2"/>
<polygon points="116.3,178.3 133.1,184.1 135.0,189.1 118.4,183.3" fill="#668de7"/>
<polygon points="159.0,172.9 133.1,184.1 135.0,189.1 160.7,177.8" fill="#668de7"/>
<polygon points="118.4,183.3 135.0,189.1 137.0,194.4 120.5,188.6" fill="#f47e84"/>
<polygon points="160.7,177.8 135.0,189.1 137.0,194.4 162.4,183.1" fill="#f47e84"/>
<polygon points="120.5,188.6 137.0,194.4 139.3,200.5 123.0,194.6" fill="#67e546"/>
<polygon points="162.4,183.1 137.0,194.4 139.3,200.5 164.4,189.1" fill="#67e546"/>
<polygon points="123.0,194.6 139.3,200.5 141.2,205.4 125.0,199.5" fill="#c8e2a1"/>
<polygon points="164.4,189.1 139.3,200.5 141.2,205.4 166.0,194.0" fill="#c8e2a1"/>
<polygon points="125.0,199.5 141.2,205.4 142.8,209.6 126.6,203.7" fill="#7bdb25"/>
<polygon points="166.0,194.0 141.2,205.4 142.8,209.6 167.4,198.1" fill="#7bdb25"/>
<polygon points="126.6,203.7 142.8,209.6 144.5,213.9 128.4,208.0" fill="#9b3e4f"/>
<polygon points="167.4,198.1 142.8,209.6 144.5,213.9 168.9,202.5" fill="#9b3e4f"/>
<polygon points="128.4,208.0 144.5,213.9 146.1,218.2 130.1,212.3" fill="#bb4981"/>
<polygon points="168.9,202.5 144.5,213.9 146.1,218.2 170.3,206.7" fill="#bb4981"/>
<polygon points="113.5,86.1 132.0,91.1 101.5,101.5 82.9,96.2" fill="#909020"/>
<polygon points="101.5,101.5 120.7,107.1 121.3,108.8 102.2,103.2" fill="#e850c0"/>
<polygon points="151.0,96.3 120.7,107.1 121.3,108.8 151.5,98.0" fill="#e850c0"/>
<polygon points="102.2,103.2 121.3,108.8 123.7,115.5 104.7,109.9" fill="#208058"/>
<polygon points="151.5,98.0 121.3,108.8 123.7,115.5 153.6,104.7" fill="#208058"/>
<polygon points="104.7,109.9 123.7,115.5 126.4,123.0 107.6,117.4" fill="#46ef70"/>
<polygon points="153.6,104.7 123.7,115.5 126.4,123.0 155.8,112.1" fill="#46ef70"/>
<polygon points="107.6,117.4 126.4,123.0 128.4,128.7 109.7,123.0" fill="#f95372"/>
<polygon points="155.8,112.1 126.4,123.0 128.4,128.7 157.5,117.7" fill="#f95372"/>
<polygon points="109.7,123.0 128.4,128.7 130.4,134.4 111.9,128.6" fill="#dccead"/>
<polygon points="157.5,117.7 128.4,128.7 130.4,134.4 159.3,123.3" fill="#dccead"/>
<polygon points="111.9,128.6 130.4,134.4 132.7,140.6 114.3,134.9" fill="#b6a32f"/>
<polygon points="159.3,123.3 130.4,134.4 132.7,140.6 161.2,129.5" fill="#b6a32f"/>
<polygon points="114.3,134.9 132.7,140.6 135.1,147.5 116.9,141.8" fill="#09adea"/>
<polygon points="161.2,129.5 132.7,140.6 135.1,147.5 163.3,136.3" fill="#09adea"/>
<polygon points="116.9,141.8 135.1,147.5 137.3,153.6 119.2,147.8" fill="#09c4a9"/>
<polygon points="163.3,136.3 135.1,147.5 137.3,153.6 165.1,142.3" fill="#09c4a9"/>
<polygon points="119.2,147.8 137.3,153.6 139.5,159.7 121.5,153.9" fill="#972039"/>
<polygon points="165.1,142.3 137.3,153.6 139.5,159.7 166.9,148.4" fill="#972039"/>
<polygon points="121.5,153.9 139.5,159.7 142.0,166.9 124.2,161.0" fill="#75352b"/>
<polygon points="166.9,148.4 139.5,159.7 142.0,166.9 169.1,155.5" fill="#75352b"/>
<polygon points="124.2,161.0 142.0,166.9 143.9,172.2 126.2,166.2" fill="#145c8a"/>
<polygon points="169.1,155.5 142.0,166.9 143.9,172.2 170.7,160.7" fill="#145c8a"/>
<polygon points="126.2,166.2 143.9,172.2 146.1,178.5 128.6,172.5" fill="#d884cf"/>
<polygon points="170.7,160.7 143.9,172.2 146.1,178.5 172.6,167.0" fill="#d884cf"/>
<polygon points="128.6,172.5 146.1,178.5 147.9,183.3 130.5,177.3" fill="#fda72d"/>
<polygon points="172.6,167.0 146.1,178.5 147.9,183.3 174.1,171.8" fill="#fda72d"/>
<polygon points="130.5,177.3 147.9,183.3 149.7,188.3 132.4,182.4" fill="#5dd925"/>
<polygon points="174.1,171.8 147.9,183.3 149.7,188.3 175.6,176.8" fill="#5dd925"/>
<polygon points="132.4,182.4 149.7,188.3 151.4,193.3 134.3,187.3" fill="#082d85"/>
<polygon points="175.6,176.8 149.7,188.3 151.4,193.3 177.1,181.7" fill="#082d85"/>
<polygon points="134.3,187.3 151.4,193.3 153.0,197.7 136.0,191.7" fill="#712287"/>
<polygon points="177.1,181.7 151.4,193.3 153.0,197.7 178.5,186.1" fill="#712287"/>
<polygon points="136.0,191.7 153.0,197.7 155.1,203.7 138.3,197.7" fill="#e805ad"/>
<polygon points="178.5,186.1 153.0,197.7 155.1,203.7 180.3,192.1" fill="#e805ad"/>
<polygon points="138.3,197.7 155.1,203.7 157.3,209.9 140.6,203.9" fill="#d58942"/>
<polygon points="180.3,192.1 155.1,203.7 157.3,209.9 182.2,198.2" fill="#d58942"/>
<polygon points="140.6,203.9 157.3,209.9 158.8,214.0 142.2,208.0" fill="#7a3852"/>
<polygon points="182.2,198.2 157.3,209.9 158.8,214.0 183.4,202.3" fill="#7a3852"/>
<polygon points="142.2,208.0 158.8,214.0 160.4,218.5 143.9,212.4" fill="#5c679f"/>
<polygon points="183.4,202.3 158.8,214.0 160.4,218.5 184.8,206.8" fill="#5c679f"/>
<polygon points="143.9,212.4 160.4,218.5 162.2,223.6 145.9,217.6" fill="#6994e4"/>
<polygon points="184.8,206.8 160.4,218.5 162.2,223.6 186.3,211.9" fill="#6994e4"/>
<polygon points="145.9,217.6 162.2,223.6 162.5,224.3 146.1,218.2" fill="#5b8ab1"/>
<polygon points="186.3,211.9 162.2,223.6 162.5,224.3 186.5,212.5" fill="#5b8ab1"/>
<polygon points="132.0,91.1 151.0,96.3 120.7,107.1 101.5,101.5" fill="#e850c0"/>
<polygon points="120.7,107.1 140.5,112.8 141.1,114.5 121.3,108.8" fill="#e0c060"/>
<polygon points="170.7,101.7 140.5,112.8 141.1,114.5 171.2,103.4" fill="#e0c060"/>
<polygon points="121.3,108.8 141.1,114.5 143.3,121.3 123.7,115.5" fill="#50e8a0"/>
<polygon points="171.2,103.4 141.1,114.5 143.3,121.3 173.0,110.1" fill="#50e8a0"/>
<polygon points="123.7,115.5 143.3,121.3 145.1,126.8 125.7,121.0" fill="#098012"/>
<polygon points="173.0,110.1 143.3,121.3 145.1,126.8 174.6,115.6" fill="#098012"/>
<polygon points="125.7,121.0 145.1,126.8 147.6,134.3 128.3,128.4" fill="#61f37d"/>
<polygon points="174.6,115.6 145.1,126.8 147.6,134.3 176.6,122.9" fill="#61f37d"/>
<polygon points="128.3,128.4 147.6,134.3 150.1,142.0 131.1,136.1" fill="#36ddfd"/>
<polygon points="176.6,122.9 147.6,134.3 150.1,142.0 178.8,130.6" fill="#36ddfd"/>
<polygon points="131.1,136.1 150.1,142.0 152.3,148.6 133.4,142.7" fill="#c99d6e"/>
<polygon points="178.8,130.6 150.1,142.0 152.3,148.6 180.6,137.1" fill="#c99d6e"/>
<polygon points="133.4,142.7 152.3,148.6 154.8,156.2 136.1,150.2" fill="#af6547"/>
<polygon points="180.6,137.1 152.3,148.6 154.8,156.2 182.7,144.6" fill="#af6547"/>
<polygon points="136.1,150.2 154.8,156.2 156.8,162.1 138.2,156.1" fill="#b11b42"/>
<polygon points="182.7,144.6 154.8,156.2 156.8,162.1 184.3,150.5" fill="#b11b42"/>
<polygon points="138.2,156.1 156.8,162.1 158.4,167.1 139.9,161.0" fill="#82dc53"/>
<polygon points="184.3,150.5 156.8,162.1 158.4,167.1 185.7,155.4" fill="#82dc53"/>
<polygon points="139.9,161.0 158.4,167.1 160.0,172.0 141.7,165.9" fill="#c3907c"/>
<polygon points="185.7,155.4 158.4,167.1 160.0,172.0 187.0,160.2" fill="#c3907c"/>
<polygon points="141.7,165.9 160.0,172.0 162.1,178.3 143.9,172.2" fill="#17eb5e"/>
<polygon points="187.0,160.2 160.0,172.0 162.1,178.3 188.8,166.5" fill="#17eb5e"/>
<polygon points="143.9,172.2 162.1,178.3 163.7,183.3 145.7,177.2" fill="#e40186"/>
<polygon points="188.8,166.5 162.1,178.3 163.7,183.3 190.1,171.5" fill="#e40186"/>
<polygon points="145.7,177.2 163.7,183.3 165.5,188.6 147.6,182.5" fill="#a8a57d"/>
<polygon points="190.1,171.5 163.7,183.3 165.5,188.6 191.6,176.8" fill="#a8a57d"/>
<polygon points="147.6,182.5 165.5,188.6 167.0,193.2 149.2,187.0" fill="#9e6fb6"/>
<polygon points="191.6,176.8 165.5,188.6 167.0,193.2 192.9,181.3" fill="#9e6fb6"/>
<polygon points="149.2,187.0 167.0,193.2 168.5,197.9 150.9,191.8" fill="#abc32a"/>
<polygon points="192.9,181.3 167.0,193.2 168.5,197.9 194.2,186.0" fill="#abc32a"/>
<polygon points="150.9,191.8 168.5,197.9 170.3,203.3 152.8,197.1" fill="#667f02"/>
<polygon points="194.2,186.0 168.5,197.9 170.3,203.3 195.7,191.3" fill="#667f02"/>
<polygon points="152.8,197.1 170.3,203.3 171.8,207.7 154.4,201.5" fill="#2d49cc"/>
<polygon points="195.7,191.3 170.3,203.3 171.8,207.7 196.9,195.7" fill="#2d49cc"/>
<polygon points="154.4,201.5 171.8,207.7 173.5,213.1 156.3,206.9" fill="#c90b99"/>
<polygon points="196.9,195.7 171.8,207.7 173.5,213.1 198.4,201.1" fill="#c90b99"/>
<polygon points="156.3,206.9 173.5,213.1 175.1,217.8 157.9,211.6" fill="#772b4f"/>
<polygon points="198.4,201.1 173.5,213.1 175.1,217.8 199.7,205.8" fill="#772b4f"/>
<polygon points="157.9,211.6 175.1,217.8 176.8,223.1 159.8,216.9" fill="#c7a6fd"/>
<polygon points="199.7,205.8 175.1,217.8 176.8,223.1 201.2,211.1" fill="#c7a6fd"/>
<polygon points="159.8,216.9 176.8,223.1 178.2,227.4 161.3,221.1" fill="#4a16db"/>
<polygon points="201.2,211.1 176.8,223.1 178.2,227.4 202.4,215.3" fill="#4a16db"/>
<polygon points="161.3,221.1 178.2,227.4 179.3,230.5 162.5,224.3" fill="#470875"/>
<polygon points="202.4,215.3 178.2,227.4 179.3,230.5 203.2,218.4" fill="#470875"/>
<polygon points="151.0,96.3 170.7,101.7 140.5,112.8 120.7,107.1" fill="#e0c060"/>
<polygon points="140.5,112.8 160.9,118.7 161.5,120.4 141.1,114.5" fill="#a06020"/>
<polygon points="191.0,107.2 160.9,118.7 161.5,120.4 191.4,109.0" fill="#a06020"/>
<polygon points="141.1,114.5 161.5,120.4 163.5,127.2 143.3,121.3" fill="#a030e0"/>
<polygon points="191.4,109.0 161.5,120.4 163.5,127.2 193.1,115.7" fill="#a030e0"/>
<polygon points="143.3,121.3 163.5,127.2 165.3,133.2 145.2,127.2" fill="#2b0f15"/>
<polygon points="193.1,115.7 163.5,127.2 165.3,133.2 194.6,121.6" fill="#2b0f15"/>
<polygon points="145.2,127.2 165.3,133.2 167.3,139.6 147.4,133.6" fill="#35c0e7"/>
<polygon points="194.6,121.6 165.3,133.2 167.3,139.6 196.2,127.9" fill="#35c0e7"/>
<polygon points="147.4,133.6 167.3,139.6 169.3,146.5 149.6,140.4" fill="#097dfa"/>
<polygon points="196.2,127.9 167.3,139.6 169.3,146.5 197.9,134.7" fill="#097dfa"/>
<polygon points="149.6,140.4 169.3,146.5 171.1,152.4 151.5,146.3" fill="#e9232f"/>
<polygon points="197.9,134.7 169.3,146.5 171.1,152.4 199.3,140.6" fill="#e9232f"/>
<polygon points="151.5,146.3 171.1,152.4 173.2,159.2 153.8,153.1" fill="#21f281"/>
<polygon points="199.3,140.6 171.1,152.4 173.2,159.2 201.0,147.3" fill="#21f281"/>
<polygon points="153.8,153.1 173.2,159.2 175.3,166.3 156.1,160.1" fill="#877869"/>
<polygon points="201.0,147.3 173.2,159.2 175.3,166.3 202.8,154.3" fill="#877869"/>
<polygon points="156.1,160.1 175.3,166.3 176.9,171.8 157.9,165.6" fill="#ebfcc3"/>
<polygon points="202.8,154.3 175.3,166.3 176.9,171.8 204.2,159.8" fill="#ebfcc3"/>
<polygon points="157.9,165.6 176.9,171.8 178.4,176.8 159.5,170.6" fill="#931765"/>
<polygon points="204.2,159.8 176.9,171.8 178.4,176.8 205.4,164.7" fill="#931765"/>
<polygon points="159.5,170.6 178.4,176.8 179.9,181.7 161.1,175.5" fill="#4ba982"/>
<polygon points="205.4,164.7 178.4,176.8 179.9,181.7 206.6,169.6" fill="#4ba982"/>
<polygon points="161.1,175.5 179.9,181.7 181.8,187.9 163.2,181.6" fill="#9b4406"/>
<polygon points="206.6,169.6 179.9,181.7 181.8,187.9 208.2,175.8" fill="#9b4406"/>
<polygon points="163.2,181.6 181.8,187.9 183.5,193.6 165.0,187.3" fill="#f88932"/>
<polygon points="208.2,175.8 181.8,187.9 183.5,193.6 209.6,181.4" fill="#f88932"/>
<polygon points="165.0,187.3 183.5,193.6 185.3,199.6 167.0,193.3" fill="#fa9492"/>
<polygon points="209.6,181.4 183.5,193.6 185.3,199.6 211.1,187.4" fill="#fa9492"/>
<polygon points="167.0,193.3 185.3,199.6 186.9,205.0 168.8,198.7" fill="#ee3c66"/>
<polygon points="211.1,187.4 185.3,199.6 186.9,205.0 212.4,192.8" fill="#ee3c66"/>
<polygon points="168.8,198.7 186.9,205.0 188.4,210.0 170.4,203.7" fill="#2bf208"/>
<polygon points="212.4,192.8 186.9,205.0 188.4,210.0 213.7,197.7" fill="#2bf208"/>
<polygon points="170.4,203.7 188.4,210.0 189.9,214.9 172.0,208.5" fill="#27e689"/>
<polygon points="213.7,197.7 188.4,210.0 189.9,214.9 214.9,202.6" fill="#27e689"/>
<polygon points="172.0,208.5 189.9,214.9 191.4,219.8 173.7,213.4" fill="#6b262e"/>
<polygon points="214.9,202.6 189.9,214.9 191.4,219.8 216.1,207.5" fill="#6b262e"/>
<polygon points="173.7,213.4 191.4,219.8 192.7,224.2 175.1,217.8" fill="#86b843"/>
<polygon points="216.1,207.5 191.4,219.8 192.7,224.2 217.2,211.9" fill="#86b843"/>
<polygon points="175.1,217.8 192.7,224.2 194.3,229.4 176.8,223.0" fill="#8f39ba"/>
<polygon points="217.2,211.9 192.7,224.2 194.3,229.4 218.5,217.1" fill="#8f39ba"/>
<polygon points="176.8,223.0 194.3,229.4 195.6,233.8 178.3,227.4" fill="#f8c90c"/>
<polygon points="218.5,217.1 194.3,229.4 195.6,233.8 219.6,221.5" fill="#f8c90c"/>
<polygon points="178.3,227.4 195.6,233.8 196.5,236.9 179.3,230.5" fill="#fbe6cf"/>
<polygon points="219.6,221.5 195.6,233.8 196.5,236.9 220.4,224.5" fill="#fbe6cf"/>
<polygon points="170.7,101.7 191.0,107.2 160.9,118.7 140.5,112.8" fill="#a06020"/>
<polygon points="160.9,118.7 182.1,124.8 182.5,126.5 161.5,120.4" fill="#383000"/>
<polygon points="212.0,113.0 182.1,124.8 182.5,126.5 212.3,114.7" fill="#383000"/>
<polygon points="161.5,120.4 182.5,126.5 184.4,133.4 163.5,127.2" fill="#a838f0"/>
<polygon points="212.3,114.7 182.5,126.5 184.4,133.4 213.8,121.5" fill="#a838f0"/>
<polygon points="163.5,127.2 184.4,133.4 186.2,139.9 165.5,133.7" fill="#9a48d5"/>
<polygon points="213.8,121.5 184.4,133.4 186.2,139.9 215.3,128.0" fill="#9a48d5"/>
<polygon points="165.5,133.7 186.2,139.9 187.9,146.3 167.4,140.1" fill="#a900a6"/>
<polygon points="215.3,128.0 186.2,139.9 187.9,146.3 216.7,134.2" fill="#a900a6"/>
<polygon points="167.4,140.1 187.9,146.3 189.9,153.7 169.6,147.4" fill="#cb3d64"/>
<polygon points="216.7,134.2 187.9,146.3 189.9,153.7 218.3,141.5" fill="#cb3d64"/>
<polygon points="169.6,147.4 189.9,153.7 191.8,160.8 171.7,154.5" fill="#9481be"/>
<polygon points="218.3,141.5 189.9,153.7 191.8,160.8 219.8,148.6" fill="#9481be"/>
<polygon points="171.7,154.5 191.8,160.8 193.3,166.1 173.3,159.8" fill="#c727b8"/>
<polygon points="219.8,148.6 191.8,160.8 193.3,166.1 221.0,153.8" fill="#c727b8"/>
<polygon points="173.3,159.8 193.3,166.1 195.3,173.5 175.5,167.1" fill="#8c188f"/>
<polygon points="221.0,153.8 193.3,166.1 195.3,173.5 222.6,161.1" fill="#8c188f"/>
<polygon points="175.5,167.1 195.3,173.5 196.7,178.7 177.1,172.3" fill="#924c7f"/>
<polygon points="222.6,161.1 195.3,173.5 196.7,178.7 223.7,166.3" fill="#924c7f"/>
<polygon points="177.1,172.3 196.7,178.7 198.6,185.8 179.2,179.4" fill="#dfa161"/>
<polygon points="223.7,166.3 196.7,178.7 198.6,185.8 225.3,173.4" fill="#dfa161"/>
<polygon points="179.2,179.4 198.6,185.8 200.4,192.4 181.2,185.9" fill="#db0ecc"/>
<polygon points="225.3,173.4 198.6,185.8 200.4,192.4 226.7,179.9" fill="#db0ecc"/>
<polygon points="181.2,185.9 200.4,192.4 202.2,199.1 183.2,192.6" fill="#682919"/>
<polygon points="226.7,179.9 200.4,192.4 202.2,199.1 228.2,186.6" fill="#682919"/>
<polygon points="183.2,192.6 202.2,199.1 204.0,205.7 185.2,199.2" fill="#d2e646"/>
<polygon points="228.2,186.6 202.2,199.1 204.0,205.7 229.7,193.1" fill="#d2e646"/>
<polygon points="185.2,199.2 204.0,205.7 205.6,211.5 186.9,205.0" fill="#92f819"/>
<polygon points="229.7,193.1 204.0,205.7 205.6,211.5 230.9,198.9" fill="#92f819"/>
<polygon points="186.9,205.0 205.6,211.5 207.3,217.8 188.8,211.3" fill="#4157f1"/>
<polygon points="230.9,198.9 205.6,211.5 207.3,217.8 232.3,205.2" fill="#4157f1"/>
<polygon points="188.8,211.3 207.3,217.8 208.7,222.9 190.3,216.4" fill="#909882"/>
<polygon points="232.3,205.2 207.3,217.8 208.7,222.9 233.4,210.2" fill="#909882"/>
<polygon points="190.3,216.4 208.7,222.9 210.2,228.6 192.0,222.0" fill="#85cf7a"/>
<polygon points="233.4,210.2 208.7,222.9 210.2,228.6 234.7,215.9" fill="#85cf7a"/>
<polygon points="192.0,222.0 210.2,228.6 211.5,233.3 193.5,226.7" fill="#c93d55"/>
<polygon points="234.7,215.9 210.2,228.6 211.5,233.3 235.7,220.6" fill="#c93d55"/>
<polygon points="193.5,226.7 211.5,233.3 212.9,238.5 195.0,232.0" fill="#266afe"/>
<polygon points="235.7,220.6 211.5,233.3 212.9,238.5 236.9,225.8" fill="#266afe"/>
<polygon points="195.0,232.0 212.9,238.5 214.3,243.5 196.5,236.9" fill="#e7aae6"/>
<polygon points="236.9,225.8 212.9,238.5 214.3,243.5 238.0,230.8" fill="#e7aae6"/>
<polygon points="191.0,107.2 212.0,113.0 182.1,124.8 160.9,118.7" fill="#383000"/>
<polygon points="182.1,124.8 203.9,131.1 204.3,132.8 182.5,126.5" fill="#801840"/>
<polygon points="233.6,118.9 203.9,131.1 204.3,132.8 233.9,120.6" fill="#801840"/>
<polygon points="182.5,126.5 204.3,132.8 206.0,139.7 184.4,133.4" fill="#30e040"/>
<polygon points="233.9,120.6 204.3,132.8 206.0,139.7 235.2,127.4" fill="#30e040"/>
<polygon points="184.4,133.4 206.0,139.7 207.5,146.1 186.1,139.7" fill="#da4762"/>
<polygon points="235.2,127.4 206.0,139.7 207.5,146.1 236.4,133.7" fill="#da4762"/>
<polygon points="186.1,139.7 207.5,146.1 209.0,152.1 187.7,145.6" fill="#2ea37a"/>
<polygon points="236.4,133.7 207.5,146.1 209.0,152.1 237.5,139.6" fill="#2ea37a"/>
<polygon points="187.7,145.6 209.0,152.1 210.5,158.5 189.5,152.0" fill="#670ad3"/>
<polygon points="237.5,139.6 209.0,152.1 210.5,158.5 238.7,146.0" fill="#670ad3"/>
<polygon points="189.5,152.0 210.5,158.5 212.0,164.8 191.2,158.3" fill="#6bc08a"/>
<polygon points="238.7,146.0 210.5,158.5 212.0,164.8 239.9,152.3" fill="#6bc08a"/>
<polygon points="191.2,158.3 212.0,164.8 213.5,170.9 192.8,164.4" fill="#1fff8e"/>
<polygon points="239.9,152.3 212.0,164.8 213.5,170.9 241.1,158.3" fill="#1fff8e"/>
<polygon points="192.8,164.4 213.5,170.9 215.0,177.5 194.6,170.9" fill="#b8406e"/>
<polygon points="241.1,158.3 213.5,170.9 215.0,177.5 242.3,164.8" fill="#b8406e"/>
<polygon points="194.6,170.9 215.0,177.5 216.3,182.7 196.0,176.1" fill="#7fc4cc"/>
<polygon points="242.3,164.8 215.0,177.5 216.3,182.7 243.3,170.0" fill="#7fc4cc"/>
<polygon points="196.0,176.1 216.3,182.7 217.8,189.2 197.7,182.6" fill="#dd9f0b"/>
<polygon points="243.3,170.0 216.3,182.7 217.8,189.2 244.5,176.4" fill="#dd9f0b"/>
<polygon points="197.7,182.6 217.8,189.2 219.1,194.3 199.1,187.6" fill="#d9f2fa"/>
<polygon points="244.5,176.4 217.8,189.2 219.1,194.3 245.5,181.5" fill="#d9f2fa"/>
<polygon points="199.1,187.6 219.1,194.3 220.2,199.0 200.4,192.4" fill="#c8efe5"/>
<polygon points="245.5,181.5 219.1,194.3 220.2,199.0 246.4,186.1" fill="#c8efe5"/>
<polygon points="200.4,192.4 220.2,199.0 221.4,204.2 201.8,197.5" fill="#37724f"/>
<polygon points="246.4,186.1 220.2,199.0 221.4,204.2 247.3,191.3" fill="#37724f"/>
<polygon points="201.8,197.5 221.4,204.2 222.6,209.1 203.1,202.4" fill="#37ea2b"/>
<polygon points="247.3,191.3 221.4,204.2 222.6,209.1 248.3,196.2" fill="#37ea2b"/>
<polygon points="203.1,202.4 222.6,209.1 224.0,214.8 204.7,208.1" fill="#140040"/>
<polygon points="248.3,196.2 222.6,209.1 224.0,214.8 249.3,201.9" fill="#140040"/>
<polygon points="204.7,208.1 224.0,214.8 225.2,219.7 206.0,213.0" fill="#139b41"/>
<polygon points="249.3,201.9 224.0,214.8 225.2,219.7 250.3,206.8" fill="#139b41"/>
<polygon points="206.0,213.0 225.2,219.7 226.5,225.4 207.5,218.6" fill="#df3932"/>
<polygon points="250.3,206.8 225.2,219.7 226.5,225.4 251.3,212.4" fill="#df3932"/>
<polygon points="207.5,218.6 226.5,225.4 227.6,229.8 208.7,223.0" fill="#62c685"/>
<polygon points="251.3,212.4 226.5,225.4 227.6,229.8 252.2,216.7" fill="#62c685"/>
<polygon points="208.7,223.0 227.6,229.8 228.7,234.4 210.0,227.6" fill="#00059a"/>
<polygon points="252.2,216.7 227.6,229.8 228.7,234.4 253.0,221.3" fill="#00059a"/>
<polygon points="210.0,227.6 228.7,234.4 230.1,240.5 211.6,233.7" fill="#8ea17c"/>
<polygon points="253.0,221.3 228.7,234.4 230.1,240.5 254.2,227.4" fill="#8ea17c"/>
<polygon points="211.6,233.7 230.1,240.5 231.3,245.4 212.9,238.7" fill="#787e0e"/>
<polygon points="254.2,227.4 230.1,240.5 231.3,245.4 255.1,232.4" fill="#787e0e"/>
<polygon points="212.9,238.7 231.3,245.4 232.5,250.3 214.3,243.5" fill="#9d1c0b"/>
<polygon points="255.1,232.4 231.3,245.4 232.5,250.3 256.0,237.2" fill="#9d1c0b"/>
<polygon points="212.0,113.0 233.6,118.9 203.9,131.1 182.1,124.8" fill="#801840"/>
<polygon points="203.9,131.1 226.5,137.6 226.9,139.3 204.3,132.8" fill="#b01870"/>
<polygon points="256.0,125.0 226.5,137.6 226.9,139.3 256.2,126.7" fill="#b01870"/>
<polygon points="204.3,132.8 226.9,139.3 228.3,146.3 206.0,139.7" fill="#808050"/>
<polygon points="256.2,126.7 226.9,139.3 228.3,146.3 257.3,133.6" fill="#808050"/>
<polygon points="206.0,139.7 228.3,146.3 229.5,152.2 207.4,145.6" fill="#63ffd7"/>
<polygon points="257.3,133.6 228.3,146.3 229.5,152.2 258.2,139.4" fill="#63ffd7"/>
<polygon points="207.4,145.6 229.5,152.2 230.8,158.4 208.9,151.8" fill="#d9bd74"/>
<polygon points="258.2,139.4 229.5,152.2 230.8,158.4 259.2,145.6" fill="#d9bd74"/>
<polygon points="208.9,151.8 230.8,158.4 232.2,165.2 210.5,158.5" fill="#add7b9"/>
<polygon points="259.2,145.6 230.8,158.4 232.2,165.2 260.2,152.3" fill="#add7b9"/>
<polygon points="210.5,158.5 232.2,165.2 233.7,172.4 212.2,165.7" fill="#650395"/>
<polygon points="260.2,152.3 232.2,165.2 233.7,172.4 261.4,159.4" fill="#650395"/>
<polygon points="212.2,165.7 233.7,172.4 235.2,179.5 213.9,172.8" fill="#2269fd"/>
<polygon points="261.4,159.4 233.7,172.4 235.2,179.5 262.5,166.5" fill="#2269fd"/>
<polygon points="213.9,172.8 235.2,179.5 236.7,187.0 215.7,180.3" fill="#9f6376"/>
<polygon points="262.5,166.5 235.2,179.5 236.7,187.0 263.6,173.9" fill="#9f6376"/>
<polygon points="215.7,180.3 236.7,187.0 238.0,193.2 217.2,186.4" fill="#879737"/>
<polygon points="263.6,173.9 236.7,187.0 238.0,193.2 264.6,180.0" fill="#879737"/>
<polygon points="217.2,186.4 238.0,193.2 239.5,200.3 218.9,193.5" fill="#fd5f72"/>
<polygon points="264.6,180.0 238.0,193.2 239.5,200.3 265.7,187.1" fill="#fd5f72"/>
<polygon points="218.9,193.5 239.5,200.3 240.7,206.2 220.3,199.4" fill="#1c4ac9"/>
<polygon points="265.7,187.1 239.5,200.3 240.7,206.2 266.6,193.0" fill="#1c4ac9"/>
<polygon points="220.3,199.4 240.7,206.2 241.7,211.0 221.4,204.1" fill="#0c48d4"/>
<polygon points="266.6,193.0 240.7,206.2 241.7,211.0 267.4,197.7" fill="#0c48d4"/>
<polygon points="221.4,204.1 241.7,211.0 242.6,215.7 222.5,208.8" fill="#1e5ec9"/>
<polygon points="267.4,197.7 241.7,211.0 242.6,215.7 268.1,202.4" fill="#1e5ec9"/>
<polygon points="222.5,208.8 242.6,215.7 243.8,221.2 223.9,214.3" fill="#a03928"/>
<polygon points="268.1,202.4 242.6,215.7 243.8,221.2 269.0,207.8" fill="#a03928"/>
<polygon points="223.9,214.3 243.8,221.2 245.1,227.6 225.4,220.7" fill="#a8615e"/>
<polygon points="269.0,207.8 243.8,221.2 245.1,227.6 270.0,214.3" fill="#a8615e"/>
<polygon points="225.4,220.7 245.1,227.6 246.3,233.3 226.8,226.4" fill="#ef109f"/>
<polygon points="270.0,214.3 245.1,227.6 246.3,233.3 270.9,219.9" fill="#ef109f"/>
<polygon points="226.8,226.4 246.3,233.3 247.4,238.9 228.1,232.0" fill="#c1bfa9"/>
<polygon points="270.9,219.9 246.3,233.3 247.4,238.9 271.7,225.5" fill="#c1bfa9"/>
<polygon points="228.1,232.0 247.4,238.9 248.5,244.0 229.3,237.0" fill="#370128"/>
<polygon points="271.7,225.5 247.4,238.9 248.5,244.0 272.5,230.5" fill="#370128"/>
<polygon points="229.3,237.0 248.5,244.0 249.4,248.6 230.4,241.6" fill="#b3d73f"/>
<polygon points="272.5,230.5 248.5,244.0 249.4,248.6 273.2,235.2" fill="#b3d73f"/>
<polygon points="230.4,241.6 249.4,248.6 250.5,253.7 231.6,246.7" fill="#6ac2b6"/>
<polygon points="273.2,235.2 249.4,248.6 250.5,253.7 274.0,240.2" fill="#6ac2b6"/>
<polygon points="231.6,246.7 250.5,253.7 251.2,257.2 232.5,250.3" fill="#9edd2c"/>
<polygon points="274.0,240.2 250.5,253.7 251.2,257.2 274.6,243.8" fill="#9edd2c"/>
<polygon points="233.6,118.9 256.0,125.0 226.5,137.6 203.9,131.1" fill="#b01870"/>
<polygon points="226.5,137.6 249.9,144.3 250.2,146.1 226.9,139.3" fill="#b0e040"/>
<polygon points="279.1,131.3 249.9,144.3 250.2,146.1 279.3,133.0" fill="#b0e040"/>
<polygon points="226.9,139.3 250.2,146.1 251.4,153.1 228.3,146.3" fill="#f0d060"/>
<polygon points="279.3,133.0 250.2,146.1 251.4,153.1 280.1,140.0" fill="#f0d060"/>
<polygon points="228.3,146.3 251.4,153.1 252.6,159.9 229.7,153.0" fill="#19f264"/>
<polygon points="280.1,140.0 251.4,153.1 252.6,159.9 281.0,146.7" fill="#19f264"/>
<polygon points="229.7,153.0 252.6,159.9 254.0,168.0 231.4,161.1" fill="#62a5ba"/>
<polygon points="281.0,146.7 252.6,159.9 254.0,168.0 282.0,154.7" fill="#62a5ba"/>
<polygon points="231.4,161.1 254.0,168.0 255.2,175.4 232.9,168.5" fill="#f20fd2"/>
<polygon points="282.0,154.7 254.0,168.0 255.2,175.4 282.8,162.1" fill="#f20fd2"/>
<polygon points="232.9,168.5 255.2,175.4 256.3,181.4 234.1,174.5" fill="#cf14c0"/>
<polygon points="282.8,162.1 255.2,175.4 256.3,181.4 283.6,168.0" fill="#cf14c0"/>
<polygon points="234.1,174.5 256.3,181.4 257.2,186.7 235.2,179.7" fill="#201f83"/>
<polygon points="283.6,168.0 256.3,181.4 257.2,186.7 284.2,173.2" fill="#201f83"/>
<polygon points="235.2,179.7 257.2,186.7 258.1,192.3 236.4,185.3" fill="#20adb9"/>
<polygon points="284.2,173.2 257.2,186.7 258.1,192.3 284.9,178.8" fill="#20adb9"/>
<polygon points="236.4,185.3 258.1,192.3 259.1,198.0 237.5,191.0" fill="#1686a2"/>
<polygon points="284.9,178.8 258.1,192.3 259.1,198.0 285.6,184.5" fill="#1686a2"/>
<polygon points="237.5,191.0 259.1,198.0 260.3,205.2 239.0,198.1" fill="#980121"/>
<polygon points="285.6,184.5 259.1,198.0 260.3,205.2 286.5,191.6" fill="#980121"/>
<polygon points="239.0,198.1 260.3,205.2 261.2,210.1 240.0,203.0" fill="#7736f3"/>
<polygon points="286.5,191.6 260.3,205.2 261.2,210.1 287.0,196.4" fill="#7736f3"/>
<polygon points="240.0,203.0 261.2,210.1 262.3,216.4 241.3,209.4" fill="#eec580"/>
<polygon points="287.0,196.4 261.2,210.1 262.3,216.4 287.8,202.8" fill="#eec580"/>
<polygon points="241.3,209.4 262.3,216.4 263.4,223.1 242.7,216.0" fill="#fc43fe"/>
<polygon points="287.8,202.8 262.3,216.4 263.4,223.1 288.6,209.4" fill="#fc43fe"/>
<polygon points="242.7,216.0 263.4,223.1 264.3,228.0 243.7,220.9" fill="#9b4d78"/>
<polygon points="288.6,209.4 263.4,223.1 264.3,228.0 289.2,214.3" fill="#9b4d78"/>
<polygon points="243.7,220.9 264.3,228.0 265.1,233.2 244.8,226.1" fill="#a3ebb9"/>
<polygon points="289.2,214.3 264.3,228.0 265.1,233.2 289.9,219.4" fill="#a3ebb9"/>
<polygon points="244.8,226.1 265.1,233.2 266.2,239.2 246.0,232.1" fill="#2865c8"/>
<polygon points="289.9,219.4 265.1,233.2 266.2,239.2 290.6,225.4" fill="#2865c8"/>
<polygon points="246.0,232.1 266.2,239.2 267.2,245.0 247.2,237.9" fill="#7ed021"/>
<polygon points="290.6,225.4 266.2,239.2 267.2,245.0 291.3,231.2" fill="#7ed021"/>
<polygon points="247.2,237.9 267.2,245.0 268.1,250.5 248.4,243.4" fill="#f6a652"/>
<polygon points="291.3,231.2 267.2,245.0 268.1,250.5 292.0,236.7" fill="#f6a652"/>
<polygon points="248.4,243.4 268.1,250.5 269.1,256.6 249.6,249.4" fill="#352487"/>
<polygon points="292.0,236.7 268.1,250.5 269.1,256.6 292.7,242.7" fill="#352487"/>
<polygon points="249.6,249.4 269.1,256.6 270.0,261.8 250.7,254.6" fill="#6a31d7"/>
<polygon points="292.7,242.7 269.1,256.6 270.0,261.8 293.3,247.9" fill="#6a31d7"/>
<polygon points="250.7,254.6 270.0,261.8 270.5,264.4 251.2,257.2" fill="#e45877"/>
<polygon points="293.3,247.9 270.0,261.8 270.5,264.4 293.7,250.6" fill="#e45877"/>
<polygon points="256.0,125.0 279.1,131.3 249.9,144.3 226.5,137.6" fill="#b0e040"/>
<polygon points="249.9,144.3 274.1,151.3 274.7,155.8 250.7,148.7" fill="#707070"/>
<polygon points="303.0,137.8 274.1,151.3 274.7,155.8 303.4,142.2" fill="#707070"/>
<polygon points="250.7,148.7 274.7,155.8 275.3,159.6 251.3,152.6" fill="#d05060"/>
<polygon points="303.4,142.2 274.7,155.8 275.3,159.6 303.7,146.1" fill="#d05060"/>
<polygon points="251.3,152.6 275.3,159.6 275.7,163.2 251.9,156.2" fill="#a0f060"/>
<polygon points="303.7,146.1 275.3,159.6 275.7,163.2 304.0,149.6" fill="#a0f060"/>
<polygon points="251.9,156.2 275.7,163.2 276.3,167.4 252.7,160.4" fill="#7020d0"/>
<polygon points="304.0,149.6 275.7,163.2 276.3,167.4 304.4,153.8" fill="#7020d0"/>
<polygon points="252.7,160.4 276.3,167.4 276.7,170.8 253.2,163.7" fill="#301848"/>
<polygon points="304.4,153.8 276.3,167.4 276.7,170.8 304.7,157.1" fill="#301848"/>
<polygon points="253.2,163.7 276.7,170.8 277.3,175.1 254.0,168.0" fill="#107030"/>
<polygon points="304.7,157.1 276.7,170.8 277.3,175.1 305.0,161.4" fill="#107030"/>
<polygon points="254.0,168.0 277.3,175.1 277.8,178.7 254.6,171.5" fill="#801010"/>
<polygon points="305.0,161.4 277.3,175.1 277.8,178.7 305.3,164.9" fill="#801010"/>
<polygon points="254.6,171.5 277.8,178.7 278.3,182.6 255.2,175.4" fill="#2020b0"/>
<polygon points="305.3,164.9 277.8,178.7 278.3,182.6 305.7,168.7" fill="#2020b0"/>
<polygon points="255.2,175.4 278.3,182.6 278.8,186.1 255.8,179.0" fill="#a0f0a0"/>
<polygon points="305.7,168.7 278.3,182.6 278.8,186.1 306.0,172.3" fill="#a0f0a0"/>
<polygon points="255.8,179.0 278.8,186.1 279.2,189.1 256.3,181.9" fill="#f080c0"/>
<polygon points="306.0,172.3 278.8,186.1 279.2,189.1 306.2,175.2" fill="#f080c0"/>
<polygon points="256.3,181.9 279.2,189.1 279.6,192.0 256.8,184.8" fill="#6326be"/>
<polygon points="306.2,175.2 279.2,189.1 279.6,192.0 306.5,178.1" fill="#6326be"/>
<polygon points="256.8,184.8 279.6,192.0 280.1,195.5 257.4,188.3" fill="#5be585"/>
<polygon points="306.5,178.1 279.6,192.0 280.1,195.5 306.8,181.5" fill="#5be585"/>
<polygon points="257.4,188.3 280.1,195.5 280.6,199.3 258.1,192.1" fill="#0336b3"/>
<polygon points="306.8,181.5 280.1,195.5 280.6,199.3 307.1,185.4" fill="#0336b3"/>
<polygon points="258.1,192.1 280.6,199.3 281.0,202.3 258.6,195.1" fill="#bcae48"/>
<polygon points="307.1,185.4 280.6,199.3 281.0,202.3 307.3,188.4" fill="#bcae48"/>
<polygon points="258.6,195.1 281.0,202.3 281.4,205.1 259.1,197.9" fill="#821368"/>
<polygon points="307.3,188.4 281.0,202.3 281.4,205.1 307.6,191.1" fill="#821368"/>
<polygon points="259.1,197.9 281.4,205.1 281.9,208.9 259.7,201.6" fill="#a7d1be"/>
<polygon points="307.6,191.1 281.4,205.1 281.9,208.9 307.9,194.9" fill="#a7d1be"/>
<polygon points="259.7,201.6 281.9,208.9 282.2,211.8 260.2,204.5" fill="#9f2768"/>
<polygon points="307.9,194.9 281.9,208.9 282.2,211.8 308.1,197.7" fill="#9f2768"/>
<polygon points="260.2,204.5 282.2,211.8 282.6,214.4 260.7,207.1" fill="#fdf720"/>
<polygon points="308.1,197.7 282.2,211.8 282.6,214.4 308.4,200.4" fill="#fdf720"/>
<polygon points="260.7,207.1 282.6,214.4 283.0,217.5 261.2,210.2" fill="#ca4f2e"/>
<polygon points="308.4,200.4 282.6,214.4 283.0,217.5 308.6,203.5" fill="#ca4f2e"/>
<polygon points="261.2,210.2 283.0,217.5 283.5,220.9 261.8,213.6" fill="#cb8ad1"/>
<polygon points="308.6,203.5 283.0,217.5 283.5,220.9 308.9,206.8" fill="#cb8ad1"/>
<polygon points="261.8,213.6 283.5,220.9 284.0,224.7 262.4,217.4" fill="#9dd51a"/>
<polygon points="308.9,206.8 283.5,220.9 284.0,224.7 309.2,210.6" fill="#9dd51a"/>
<polygon points="262.4,217.4 284.0,224.7 284.4,227.6 262.9,220.3" fill="#b6d4d5"/>
<polygon points="309.2,210.6 284.0,224.7 284.4,227.6 309.5,213.5" fill="#b6d4d5"/>
<polygon points="262.9,220.3 284.4,227.6 284.7,230.1 263.3,222.8" fill="#ba64c8"/>
<polygon points="309.5,213.5 284.4,227.6 284.7,230.1 309.7,216.0" fill="#ba64c8"/>
<polygon points="263.3,222.8 284.7,230.1 285.2,233.4 263.9,226.1" fill="#6803de"/>
<polygon points="309.7,216.0 284.7,230.1 285.2,233.4 310.0,219.3" fill="#6803de"/>
<polygon points="263.9,226.1 285.2,233.4 285.6,236.9 264.5,229.6" fill="#d83a2e"/>
<polygon points="310.0,219.3 285.2,233.4 285.6,236.9 310.3,222.8" fill="#d83a2e"/>
<polygon points="264.5,229.6 285.6,236.9 286.0,239.8 265.0,232.5" fill="#baeb53"/>
<polygon points="310.3,222.8 285.6,236.9 286.0,239.8 310.5,225.6" fill="#baeb53"/>
<polygon points="265.0,232.5 286.0,239.8 286.3,242.3 265.4,235.0" fill="#1a48cb"/>
<polygon points="310.5,225.6 286.0,239.8 286.3,242.3 310.8,228.1" fill="#1a48cb"/>
<polygon points="265.4,235.0 286.3,242.3 286.7,244.8 265.9,237.4" fill="#bd574a"/>
<polygon points="310.8,228.1 286.3,242.3 286.7,244.8 311.0,230.6" fill="#bd574a"/>
<polygon points="265.9,237.4 286.7,244.8 287.0,247.5 266.3,240.1" fill="#525722"/>
<polygon points="311.0,230.6 286.7,244.8 287.0,247.5 311.2,233.3" fill="#525722"/>
<polygon points="266.3,240.1 287.0,247.5 287.4,249.9 266.7,242.5" fill="#fb659a"/>
<polygon points="311.2,233.3 287.0,247.5 287.4,249.9 311.4,235.7" fill="#fb659a"/>
<polygon points="266.7,242.5 287.4,249.9 287.7,252.3 267.1,245.0" fill="#16f7a1"/>
<polygon points="311.4,235.7 287.4,249.9 287.7,252.3 311.6,238.1" fill="#16f7a1"/>
<polygon points="267.1,245.0 287.7,252.3 288.0,254.6 267.5,247.3" fill="#c62c52"/>
<polygon points="311.6,238.1 287.7,252.3 288.0,254.6 311.8,240.4" fill="#c62c52"/>
<polygon points="267.5,247.3 288.0,254.6 288.4,257.6 268.0,250.2" fill="#71cf64"/>
<polygon points="311.8,240.4 288.0,254.6 288.4,257.6 312.1,243.4" fill="#71cf64"/>
<polygon points="268.0,250.2 288.4,257.6 288.8,260.7 268.6,253.3" fill="#5d6f15"/>
<polygon points="312.1,243.4 288.4,257.6 288.8,260.7 312.3,246.5" fill="#5d6f15"/>
<polygon points="268.6,253.3 288.8,260.7 289.2,263.3 269.0,255.9" fill="#50c4b7"/>
<polygon points="312.3,246.5 288.8,260.7 289.2,263.3 312.5,249.1" fill="#50c4b7"/>
<polygon points="269.0,255.9 289.2,263.3 289.5,265.6 269.4,258.2" fill="#7e6215"/>
<polygon points="312.5,249.1 289.2,263.3 289.5,265.6 312.7,251.4" fill="#7e6215"/>
<polygon points="269.4,258.2 289.5,265.6 289.9,268.7 269.9,261.3" fill="#13a53c"/>
<polygon points="312.7,251.4 289.5,265.6 289.9,268.7 313.0,254.5" fill="#13a53c"/>
<polygon points="269.9,261.3 289.9,268.7 290.2,271.2 270.4,263.8" fill="#e99cd7"/>
<polygon points="313.0,254.5 289.9,268.7 290.2,271.2 313.2,257.0" fill="#e99cd7"/>
<polygon points="270.4,263.8 290.2,271.2 290.3,271.7 270.5,264.4" fill="#7fd9c7"/>
<polygon points="313.2,257.0 290.2,271.2 290.3,271.7 313.3,257.5" fill="#7fd9c7"/>
<polygon points="279.1,131.3 303.0,137.8 274.1,151.3 249.9,144.3" fill="#707070"/>
<polygon points="274.1,151.3 299.2,158.5 299.7,163.0 274.7,155.8" fill="#405068"/>
<polygon points="327.8,144.6 299.2,158.5 299.7,163.0 328.0,149.0" fill="#405068"/>
<polygon points="274.7,155.8 299.7,163.0 300.0,166.9 275.3,159.6" fill="#c010f0"/>
<polygon points="328.0,149.0 299.7,163.0 300.0,166.9 328.2,152.8" fill="#c010f0"/>
<polygon points="275.3,159.6 300.0,166.9 300.3,170.1 275.7,162.8" fill="#50f0c0"/>
<polygon points="328.2,152.8 300.0,166.9 300.3,170.1 328.3,156.0" fill="#50f0c0"/>
<polygon points="275.7,162.8 300.3,170.1 300.7,173.9 276.2,166.5" fill="#c01060"/>
<polygon points="328.3,156.0 300.3,170.1 300.7,173.9 328.5,159.7" fill="#c01060"/>
<polygon points="276.2,166.5 300.7,173.9 301.0,177.5 276.7,170.2" fill="#a0d070"/>
<polygon points="328.5,159.7 300.7,173.9 301.0,177.5 328.7,163.4" fill="#a0d070"/>
<polygon points="276.7,170.2 301.0,177.5 301.4,181.2 277.2,173.9" fill="#a040b0"/>
<polygon points="328.7,163.4 301.0,177.5 301.4,181.2 328.8,167.0" fill="#a040b0"/>
<polygon points="277.2,173.9 301.4,181.2 301.7,184.3 277.6,176.9" fill="#90b020"/>
<polygon points="328.8,167.0 301.4,181.2 301.7,184.3 329.0,170.0" fill="#90b020"/>
<polygon points="277.6,176.9 301.7,184.3 302.1,188.4 278.1,181.0" fill="#3060f0"/>
<polygon points="329.0,170.0 301.7,184.3 302.1,188.4 329.2,174.1" fill="#3060f0"/>
<polygon points="278.1,181.0 302.1,188.4 302.4,192.3 278.6,184.9" fill="#8090c0"/>
<polygon points="329.2,174.1 302.1,188.4 302.4,192.3 329.4,178.0" fill="#8090c0"/>
<polygon points="278.6,184.9 302.4,192.3 302.9,196.6 279.2,189.1" fill="#6030a0"/>
<polygon points="329.4,178.0 302.4,192.3 302.9,196.6 329.6,182.2" fill="#6030a0"/>
<polygon points="279.2,189.1 302.9,196.6 303.3,200.8 279.8,193.4" fill="#fb9354"/>
<polygon points="329.6,182.2 302.9,196.6 303.3,200.8 329.7,186.4" fill="#fb9354"/>
<polygon points="279.8,193.4 303.3,200.8 303.6,204.6 280.3,197.1" fill="#7121b3"/>
<polygon points="329.7,186.4 303.3,200.8 303.6,204.6 329.9,190.2" fill="#7121b3"/>
<polygon points="280.3,197.1 303.6,204.6 303.9,208.2 280.8,200.7" fill="#8151a5"/>
<polygon points="329.9,190.2 303.6,204.6 303.9,208.2 330.1,193.7" fill="#8151a5"/>
<polygon points="280.8,200.7 303.9,208.2 304.3,212.1 281.3,204.6" fill="#8ce949"/>
<polygon points="330.1,193.7 303.9,208.2 304.3,212.1 330.3,197.7" fill="#8ce949"/>
<polygon points="281.3,204.6 304.3,212.1 304.6,215.2 281.7,207.7" fill="#f56a86"/>
<polygon points="330.3,197.7 304.3,212.1 304.6,215.2 330.4,200.7" fill="#f56a86"/>
<polygon points="281.7,207.7 304.6,215.2 304.9,218.6 282.2,211.1" fill="#79a3be"/>
<polygon points="330.4,200.7 304.6,215.2 304.9,218.6 330.6,204.1" fill="#79a3be"/>
<polygon points="282.2,211.1 304.9,218.6 305.2,221.3 282.5,213.8" fill="#5dce52"/>
<polygon points="330.6,204.1 304.9,218.6 305.2,221.3 330.7,206.8" fill="#5dce52"/>
<polygon points="282.5,213.8 305.2,221.3 305.5,224.7 283.0,217.2" fill="#8ea7c0"/>
<polygon points="330.7,206.8 305.2,221.3 305.5,224.7 330.9,210.2" fill="#8ea7c0"/>
<polygon points="283.0,217.2 305.5,224.7 305.8,227.5 283.4,220.0" fill="#873a18"/>
<polygon points="330.9,210.2 305.5,224.7 305.8,227.5 331.0,213.0" fill="#873a18"/>
<polygon points="283.4,220.0 305.8,227.5 306.1,230.9 283.8,223.3" fill="#b8e735"/>
<polygon points="331.0,213.0 305.8,227.5 306.1,230.9 331.2,216.3" fill="#b8e735"/>
<polygon points="283.8,223.3 306.1,230.9 306.4,233.7 284.2,226.2" fill="#c9be87"/>
<polygon points="331.2,216.3 306.1,230.9 306.4,233.7 331.3,219.2" fill="#c9be87"/>
<polygon points="284.2,226.2 306.4,233.7 306.6,236.7 284.6,229.1" fill="#bc4ab8"/>
<polygon points="331.3,219.2 306.4,233.7 306.6,236.7 331.4,222.1" fill="#bc4ab8"/>
<polygon points="284.6,229.1 306.6,236.7 306.9,239.5 285.0,232.0" fill="#29e275"/>
<polygon points="331.4,222.1 306.6,236.7 306.9,239.5 331.6,225.0" fill="#29e275"/>
<polygon points="285.0,232.0 306.9,239.5 307.2,242.2 285.3,234.6" fill="#189781"/>
<polygon points="331.6,225.0 306.9,239.5 307.2,242.2 331.7,227.6" fill="#189781"/>
<polygon points="285.3,234.6 307.2,242.2 307.4,245.0 285.7,237.4" fill="#a00011"/>
<polygon points="331.7,227.6 307.2,242.2 307.4,245.0 331.8,230.4" fill="#a00011"/>
<polygon points="285.7,237.4 307.4,245.0 307.7,247.6 286.0,240.0" fill="#94ddd5"/>
<polygon points="331.8,230.4 307.4,245.0 307.7,247.6 331.9,233.0" fill="#94ddd5"/>
<polygon points="286.0,240.0 307.7,247.6 308.0,250.6 286.4,243.0" fill="#1843fa"/>
<polygon points="331.9,233.0 307.7,247.6 308.0,250.6 332.1,236.0" fill="#1843fa"/>
<polygon points="286.4,243.0 308.0,250.6 308.2,253.2 286.8,245.6" fill="#170b1b"/>
<polygon points="332.1,236.0 308.0,250.6 308.2,253.2 332.2,238.6" fill="#170b1b"/>
<polygon points="286.8,245.6 308.2,253.2 308.4,255.5 287.1,247.9" fill="#b59b36"/>
<polygon points="332.2,238.6 308.2,253.2 308.4,255.5 332.3,240.9" fill="#b59b36"/>
<polygon points="287.1,247.9 308.4,255.5 308.7,258.4 287.5,250.8" fill="#72d39a"/>
<polygon points="332.3,240.9 308.4,255.5 308.7,258.4 332.4,243.8" fill="#72d39a"/>
<polygon points="287.5,250.8 308.7,258.4 309.0,261.3 287.9,253.7" fill="#68bbf3"/>
<polygon points="332.4,243.8 308.7,258.4 309.0,261.3 332.6,246.7" fill="#68bbf3"/>
<polygon points="287.9,253.7 309.0,261.3 309.2,263.7 288.2,256.1" fill="#077c4c"/>
<polygon points="332.6,246.7 309.0,261.3 309.2,263.7 332.7,249.1" fill="#077c4c"/>
<polygon points="288.2,256.1 309.2,263.7 309.5,266.4 288.6,258.9" fill="#204a8a"/>
<polygon points="332.7,249.1 309.2,263.7 309.5,266.4 332.8,251.8" fill="#204a8a"/>
<polygon points="288.6,258.9 309.5,266.4 309.7,269.1 288.9,261.5" fill="#87051c"/>
<polygon points="332.8,251.8 309.5,266.4 309.7,269.1 333.0,254.5" fill="#87051c"/>
<polygon points="288.9,261.5 309.7,269.1 310.0,271.9 289.3,264.4" fill="#b3e3fc"/>
<polygon points="333.0,254.5 309.7,269.1 310.0,271.9 333.1,257.3" fill="#b3e3fc"/>
<polygon points="289.3,264.4 310.0,271.9 310.2,274.4 289.6,266.8" fill="#00161f"/>
<polygon points="333.1,257.3 310.0,271.9 310.2,274.4 333.2,259.7" fill="#00161f"/>
<polygon points="289.6,266.8 310.2,274.4 310.5,277.0 290.0,269.5" fill="#cf5f79"/>
<polygon points="333.2,259.7 310.2,274.4 310.5,277.0 333.3,262.4" fill="#cf5f79"/>
<polygon points="290.0,269.5 310.5,277.0 310.7,279.3 290.3,271.7" fill="#350664"/>
<polygon points="333.3,262.4 310.5,277.0 310.7,279.3 333.4,264.7" fill="#350664"/>
<polygon points="303.0,137.8 327.8,144.6 299.2,158.5 274.1,151.3" fill="#405068"/>
<polygon points="309.7,269.4 331.2,277.2 331.3,279.4 310.0,271.6" fill="#e050d0"/>
<polygon points="354.1,262.2 331.2,277.2 331.3,279.4 354.1,264.3" fill="#e050d0"/>
<polygon points="310.0,271.6 331.3,279.4 331.4,281.6 310.2,273.8" fill="#d4599e"/>
<polygon points="354.1,264.3 331.3,279.4 331.4,281.6 354.1,266.5" fill="#d4599e"/>
<polygon points="310.2,273.8 331.4,281.6 331.5,283.6 310.4,275.8" fill="#18f403"/>
<polygon points="354.1,266.5 331.4,281.6 331.5,283.6 354.2,268.5" fill="#18f403"/>
<polygon points="310.4,275.8 331.5,283.6 331.6,285.9 310.6,278.1" fill="#dfee29"/>
<polygon points="354.2,268.5 331.5,283.6 331.6,285.9 354.2,270.9" fill="#dfee29"/>
<polygon points="310.6,278.1 331.6,285.9 331.7,287.1 310.7,279.3" fill="#e75973"/>
<polygon points="354.2,270.9 331.6,285.9 331.7,287.1 354.2,272.1" fill="#e75973"/>
<polygon points="333.0,254.8 354.1,262.2 331.2,277.2 309.7,269.4" fill="#e050d0"/>
<polygon points="22.8,89.6 49.3,97.5 52.8,105.2 26.5,97.2" fill="#e8a068"/>
<polygon points="59.5,94.2 49.3,97.5 52.8,105.2 62.9,101.8" fill="#e8a068"/>
<polygon points="26.5,97.2 52.8,105.2 56.2,112.7 30.1,104.6" fill="#c83828"/>
<polygon points="62.9,101.8 52.8,105.2 56.2,112.7 66.2,109.3" fill="#c83828"/>
<polygon points="30.1,104.6 56.2,112.7 59.6,120.0 33.7,111.8" fill="#e8e8f8"/>
<polygon points="66.2,109.3 56.2,112.7 59.6,120.0 69.4,116.6" fill="#e8e8f8"/>
<polygon points="33.7,111.8 59.6,120.0 62.8,127.1 37.2,118.9" fill="#f02878"/>
<polygon points="69.4,116.6 59.6,120.0 62.8,127.1 72.5,123.7" fill="#f02878"/>
<polygon points="37.2,118.9 62.8,127.1 66.0,134.1 40.6,125.8" fill="#60d888"/>
<polygon points="72.5,123.7 62.8,127.1 66.0,134.1 75.6,130.7" fill="#60d888"/>
<polygon points="40.6,125.8 66.0,134.1 69.2,141.0 43.9,132.6" fill="#e88828"/>
<polygon points="75.6,130.7 66.0,134.1 69.2,141.0 78.6,137.5" fill="#e88828"/>
<polygon points="43.9,132.6 69.2,141.0 72.2,147.7 47.2,139.3" fill="#081810"/>
<polygon points="78.6,137.5 69.2,141.0 72.2,147.7 81.5,144.2" fill="#081810"/>
<polygon points="47.2,139.3 72.2,147.7 75.2,154.2 50.4,145.8" fill="#e0e860"/>
<polygon points="81.5,144.2 72.2,147.7 75.2,154.2 84.4,150.7" fill="#e0e860"/>
<polygon points="50.4,145.8 75.2,154.2 78.2,160.7 53.5,152.2" fill="#306828"/>
<polygon points="84.4,150.7 75.2,154.2 78.2,160.7 87.2,157.1" fill="#306828"/>
<polygon points="53.5,152.2 78.2,160.7 81.0,166.9 56.6,158.4" fill="#405010"/>
<polygon points="87.2,157.1 78.2,160.7 81.0,166.9 90.0,163.4" fill="#405010"/>
<polygon points="56.6,158.4 81.0,166.9 83.9,173.1 59.6,164.5" fill="#702890"/>
<polygon points="90.0,163.4 81.0,166.9 83.9,173.1 92.7,169.5" fill="#702890"/>
<polygon points="59.6,164.5 83.9,173.1 86.6,179.1 62.5,170.5" fill="#100810"/>
<polygon points="92.7,169.5 83.9,173.1 86.6,179.1 95.3,175.6" fill="#100810"/>
<polygon points="62.5,170.5 86.6,179.1 89.3,185.1 65.4,176.4" fill="#e060d8"/>
<polygon points="95.3,175.6 86.6,179.1 89.3,185.1 97.9,181.5" fill="#e060d8"/>
<polygon points="65.4,176.4 89.3,185.1 92.0,190.9 68.2,182.2" fill="#30d8c8"/>
<polygon points="97.9,181.5 89.3,185.1 92.0,190.9 100.5,187.3" fill="#30d8c8"/>
<polygon points="68.2,182.2 92.0,190.9 94.6,196.5 71.0,187.9" fill="#1010e0"/>
<polygon points="100.5,187.3 92.0,190.9 94.6,196.5 103.0,192.9" fill="#1010e0"/>
<polygon points="71.0,187.9 94.6,196.5 97.1,202.1 73.7,193.4" fill="#f0d0f0"/>
<polygon points="103.0,192.9 94.6,196.5 97.1,202.1 105.4,198.5" fill="#f0d0f0"/>
<polygon points="73.7,193.4 97.1,202.1 99.6,207.6 76.4,198.8" fill="#b02020"/>
<polygon points="105.4,198.5 97.1,202.1 99.6,207.6 107.8,204.0" fill="#b02020"/>
<polygon points="33.1,86.5 59.5,94.2 49.3,97.5 22.8,89.6" fill="#e8a068"/>
<polygon points="49.2,97.2 76.9,105.5 80.2,113.3 52.7,104.9" fill="#301838"/>
<polygon points="87.2,102.1 76.9,105.5 80.2,113.3 90.3,109.8" fill="#301838"/>
<polygon points="52.7,104.9 80.2,113.3 83.4,120.9 56.1,112.4" fill="#5068c8"/>
<polygon points="90.3,109.8 80.2,113.3 83.4,120.9 93.3,117.3" fill="#5068c8"/>
<polygon points="56.1,112.4 83.4,120.9 86.5,128.3 59.5,119.8" fill="#2050f0"/>
<polygon points="93.3,117.3 83.4,120.9 86.5,128.3 96.3,124.7" fill="#2050f0"/>
<polygon points="59.5,119.8 86.5,128.3 89.6,135.5 62.7,126.9" fill="#583810"/>
<polygon points="96.3,124.7 86.5,128.3 89.6,135.5 99.2,131.9" fill="#583810"/>
<polygon points="62.7,126.9 89.6,135.5 92.6,142.6 65.9,133.9" fill="#40f030"/>
<polygon points="99.2,131.9 89.6,135.5 92.6,142.6 102.1,139.0" fill="#40f030"/>
<polygon points="65.9,133.9 92.6,142.6 95.5,149.5 69.1,140.8" fill="#f07030"/>
<polygon points="102.1,139.0 92.6,142.6 95.5,149.5 104.9,145.9" fill="#f07030"/>
<polygon points="69.1,140.8 95.5,149.5 98.3,156.3 72.2,147.5" fill="#10f060"/>
<polygon points="104.9,145.9 95.5,149.5 98.3,156.3 107.6,152.6" fill="#10f060"/>
<polygon points="72.2,147.5 98.3,156.3 101.1,162.9 75.2,154.1" fill="#206838"/>
<polygon points="107.6,152.6 98.3,156.3 101.1,162.9 110.2,159.3" fill="#206838"/>
<polygon points="75.2,154.1 101.1,162.9 103.8,169.4 78.1,160.5" fill="#107070"/>
<polygon points="110.2,159.3 101.1,162.9 103.8,169.4 112.9,165.7" fill="#107070"/>
<polygon points="78.1,160.5 103.8,169.4 106.5,175.7 81.0,166.9" fill="#8878f0"/>
<polygon points="112.9,165.7 103.8,169.4 106.5,175.7 115.4,172.1" fill="#8878f0"/>
<polygon points="81.0,166.9 106.5,175.7 109.1,182.0 83.8,173.0" fill="#b0a840"/>
<polygon points="115.4,172.1 106.5,175.7 109.1,182.0 117.9,178.3" fill="#b0a840"/>
<polygon points="83.8,173.0 109.1,182.0 111.7,188.0 86.6,179.1" fill="#a0f0e0"/>
<polygon points="117.9,178.3 109.1,182.0 111.7,188.0 120.4,184.3" fill="#a0f0e0"/>
<polygon points="86.6,179.1 111.7,188.0 114.2,194.0 89.3,185.0" fill="#8020d0"/>
<polygon points="120.4,184.3 111.7,188.0 114.2,194.0 122.8,190.3" fill="#8020d0"/>
<polygon points="89.3,185.0 114.2,194.0 116.7,199.9 92.0,190.8" fill="#c03020"/>
<polygon points="122.8,190.3 114.2,194.0 116.7,199.9 125.1,196.1" fill="#c03020"/>
<polygon points="92.0,190.8 116.7,199.9 119.1,205.6 94.6,196.5" fill="#20c070"/>
<polygon points="125.1,196.1 116.7,199.9 119.1,205.6 127.4,201.8" fill="#20c070"/>
<polygon points="94.6,196.5 119.1,205.6 121.5,211.2 97.1,202.1" fill="#f060c0"/>
<polygon points="127.4,201.8 119.1,205.6 121.5,211.2 129.7,207.4" fill="#f060c0"/>
<polygon points="97.1,202.1 121.5,211.2 123.8,216.7 99.6,207.6" fill="#a0f0e0"/>
<polygon points="129.7,207.4 121.5,211.2 123.8,216.7 131.9,212.9" fill="#a0f0e0"/>
<polygon points="59.4,94.0 87.2,102.1 76.9,105.5 49.2,97.2" fill="#301838"/>
<polygon points="76.6,104.7 105.8,113.3 108.8,121.3 79.9,112.5" fill="#b080e0"/>
<polygon points="116.0,109.7 105.8,113.3 108.8,121.3 118.8,117.6" fill="#b080e0"/>
<polygon points="79.9,112.5 108.8,121.3 111.7,129.0 83.1,120.2" fill="#b0f0a0"/>
<polygon points="118.8,117.6 108.8,121.3 111.7,129.0 121.6,125.3" fill="#b0f0a0"/>
<polygon points="83.1,120.2 111.7,129.0 114.6,136.5 86.3,127.6" fill="#30f040"/>
<polygon points="121.6,125.3 111.7,129.0 114.6,136.5 124.4,132.8" fill="#30f040"/>
<polygon points="86.3,127.6 114.6,136.5 117.4,143.9 89.3,134.9" fill="#c05010"/>
<polygon points="124.4,132.8 114.6,136.5 117.4,143.9 127.1,140.2" fill="#c05010"/>
<polygon points="89.3,134.9 117.4,143.9 120.2,151.1 92.3,142.1" fill="#60b070"/>
<polygon points="127.1,140.2 117.4,143.9 120.2,151.1 129.7,147.3" fill="#60b070"/>
<polygon points="92.3,142.1 120.2,151.1 122.9,158.1 95.3,149.0" fill="#f8c0a0"/>
<polygon points="129.7,147.3 120.2,151.1 122.9,158.1 132.2,154.4" fill="#f8c0a0"/>
<polygon points="95.3,149.0 122.9,158.1 125.5,165.0 98.1,155.9" fill="#b0f050"/>
<polygon points="132.2,154.4 122.9,158.1 125.5,165.0 134.7,161.2" fill="#b0f050"/>
<polygon points="98.1,155.9 125.5,165.0 128.1,171.7 101.0,162.5" fill="#10c010"/>
<polygon points="134.7,161.2 125.5,165.0 128.1,171.7 137.2,167.9" fill="#10c010"/>
<polygon points="101.0,162.5 128.1,171.7 130.6,178.3 103.7,169.1" fill="#206838"/>
<polygon points="137.2,167.9 128.1,171.7 130.6,178.3 139.6,174.5" fill="#206838"/>
<polygon points="103.7,169.1 130.6,178.3 133.1,184.8 106.4,175.5" fill="#c05060"/>
<polygon points="139.6,174.5 130.6,178.3 133.1,184.8 141.9,180.9" fill="#c05060"/>
<polygon points="106.4,175.5 133.1,184.8 135.5,191.1 109.0,181.7" fill="#a070f0"/>
<polygon points="141.9,180.9 133.1,184.8 135.5,191.1 144.2,187.2" fill="#a070f0"/>
<polygon points="109.0,181.7 135.5,191.1 137.8,197.2 111.6,187.9" fill="#d090b0"/>
<polygon points="144.2,187.2 135.5,191.1 137.8,197.2 146.5,193.3" fill="#d090b0"/>
<polygon points="111.6,187.9 137.8,197.2 140.1,203.2 114.2,193.9" fill="#30a050"/>
<polygon points="146.5,193.3 137.8,197.2 140.1,203.2 148.7,199.4" fill="#30a050"/>
<polygon points="114.2,193.9 140.1,203.2 142.4,209.2 116.6,199.7" fill="#50f050"/>
<polygon points="148.7,199.4 140.1,203.2 142.4,209.2 150.8,205.3" fill="#50f050"/>
<polygon points="116.6,199.7 142.4,209.2 144.6,214.9 119.1,205.5" fill="#e8e8f8"/>
<polygon points="150.8,205.3 142.4,209.2 144.6,214.9 152.9,211.0" fill="#e8e8f8"/>
<polygon points="119.1,205.5 144.6,214.9 146.8,220.6 121.4,211.2" fill="#301070"/>
<polygon points="152.9,211.0 144.6,214.9 146.8,220.6 155.0,216.7" fill="#301070"/>
<polygon points="121.4,211.2 146.8,220.6 148.9,226.2 123.8,216.7" fill="#4040e0"/>
<polygon points="155.0,216.7 146.8,220.6 148.9,226.2 157.0,222.2" fill="#4040e0"/>
<polygon points="86.8,101.2 116.0,109.7 105.8,113.3 76.6,104.7" fill="#b080e0"/>
<polygon points="105.8,113.3 136.4,122.5 139.1,130.5 108.8,121.3" fill="#3098c8"/>
<polygon points="146.6,118.7 136.4,122.5 139.1,130.5 149.1,126.6" fill="#3098c8"/>
<polygon points="108.8,121.3 139.1,130.5 141.8,138.3 111.7,129.0" fill="#e05058"/>
<polygon points="149.1,126.6 139.1,130.5 141.8,138.3 151.6,134.4" fill="#e05058"/>
<polygon points="111.7,129.0 141.8,138.3 144.4,145.9 114.6,136.5" fill="#d08080"/>
<polygon points="151.6,134.4 141.8,138.3 144.4,145.9 154.1,142.0" fill="#d08080"/>
<polygon points="114.6,136.5 144.4,145.9 146.9,153.3 117.4,143.9" fill="#d0e0a0"/>
<polygon points="154.1,142.0 144.4,145.9 146.9,153.3 156.5,149.4" fill="#d0e0a0"/>
<polygon points="117.4,143.9 146.9,153.3 149.4,160.6 120.2,151.1" fill="#a0d060"/>
<polygon points="156.5,149.4 146.9,153.3 149.4,160.6 158.8,156.6" fill="#a0d060"/>
<polygon points="120.2,151.1 149.4,160.6 151.8,167.7 122.9,158.1" fill="#309050"/>
<polygon points="158.8,156.6 149.4,160.6 151.8,167.7 161.1,163.7" fill="#309050"/>
<polygon points="122.9,158.1 151.8,167.7 154.2,174.6 125.5,165.0" fill="#a06030"/>
<polygon points="161.1,163.7 151.8,167.7 154.2,174.6 163.3,170.6" fill="#a06030"/>
<polygon points="125.5,165.0 154.2,174.6 156.5,181.4 128.1,171.7" fill="#107080"/>
<polygon points="163.3,170.6 154.2,174.6 156.5,181.4 165.5,177.4" fill="#107080"/>
<polygon points="128.1,171.7 156.5,181.4 158.7,188.0 130.6,178.3" fill="#f08050"/>
<polygon points="165.5,177.4 156.5,181.4 158.7,188.0 167.7,184.0" fill="#f08050"/>
<polygon points="130.6,178.3 158.7,188.0 160.9,194.5 133.1,184.8" fill="#40e010"/>
<polygon points="167.7,184.0 158.7,188.0 160.9,194.5 169.7,190.4" fill="#40e010"/>
<polygon points="133.1,184.8 160.9,194.5 163.1,200.8 135.5,191.1" fill="#9080f0"/>
<polygon points="169.7,190.4 160.9,194.5 163.1,200.8 171.8,196.7" fill="#9080f0"/>
<polygon points="135.5,191.1 163.1,200.8 165.2,207.0 137.8,197.2" fill="#1030f0"/>
<polygon points="171.8,196.7 163.1,200.8 165.2,207.0 173.8,202.9" fill="#1030f0"/>
<polygon points="137.8,197.2 165.2,207.0 167.3,213.0 140.1,203.2" fill="#f0a020"/>
<polygon points="173.8,202.9 165.2,207.0 167.3,213.0 175.7,209.0" fill="#f0a020"/>
<polygon points="140.1,203.2 167.3,213.0 169.3,219.0 142.4,209.2" fill="#40e040"/>
<polygon points="175.7,209.0 167.3,213.0 169.3,219.0 177.6,214.9" fill="#40e040"/>
<polygon points="142.4,209.2 169.3,219.0 171.3,224.8 144.6,214.9" fill="#902090"/>
<polygon points="177.6,214.9 169.3,219.0 171.3,224.8 179.5,220.7" fill="#902090"/>
<polygon points="144.6,214.9 171.3,224.8 173.2,230.5 146.8,220.6" fill="#3090e0"/>
<polygon points="179.5,220.7 171.3,224.8 173.2,230.5 181.3,226.4" fill="#3090e0"/>
<polygon points="146.8,220.6 173.2,230.5 175.1,236.0 148.9,226.2" fill="#20a0b0"/>
<polygon points="181.3,226.4 173.2,230.5 175.1,236.0 183.1,231.9" fill="#20a0b0"/>
<polygon points="116.0,109.7 146.6,118.7 136.4,122.5 105.8,113.3" fill="#3098c8"/>
<polygon points="136.5,122.7 168.7,132.3 171.1,140.4 139.2,130.7" fill="#f0d880"/>
<polygon points="178.8,128.3 168.7,132.3 171.1,140.4 181.0,136.3" fill="#f0d880"/>
<polygon points="139.2,130.7 171.1,140.4 173.4,148.2 141.9,138.5" fill="#e0b0d0"/>
<polygon points="181.0,136.3 171.1,140.4 173.4,148.2 183.2,144.2" fill="#e0b0d0"/>
<polygon points="141.9,138.5 173.4,148.2 175.7,155.9 144.5,146.1" fill="#604070"/>
<polygon points="183.2,144.2 173.4,148.2 175.7,155.9 185.3,151.8" fill="#604070"/>
<polygon points="144.5,146.1 175.7,155.9 177.9,163.4 147.0,153.5" fill="#a01080"/>
<polygon points="185.3,151.8 175.7,155.9 177.9,163.4 187.4,159.3" fill="#a01080"/>
<polygon points="147.0,153.5 177.9,163.4 180.1,170.7 149.5,160.7" fill="#2020b0"/>
<polygon points="187.4,159.3 177.9,163.4 180.1,170.7 189.4,166.5" fill="#2020b0"/>
<polygon points="149.5,160.7 180.1,170.7 182.2,177.8 151.9,167.8" fill="#c0e040"/>
<polygon points="189.4,166.5 180.1,170.7 182.2,177.8 191.4,173.7" fill="#c0e040"/>
<polygon points="151.9,167.8 182.2,177.8 184.2,184.8 154.2,174.7" fill="#10e0d0"/>
<polygon points="191.4,173.7 182.2,177.8 184.2,184.8 193.3,180.6" fill="#10e0d0"/>
<polygon points="154.2,174.7 184.2,184.8 186.2,191.6 156.5,181.5" fill="#a01040"/>
<polygon points="193.3,180.6 184.2,184.8 186.2,191.6 195.2,187.4" fill="#a01040"/>
<polygon points="156.5,181.5 186.2,191.6 188.2,198.2 158.8,188.1" fill="#407070"/>
<polygon points="195.2,187.4 186.2,191.6 188.2,198.2 197.0,194.0" fill="#407070"/>
<polygon points="158.8,188.1 188.2,198.2 190.1,204.7 161.0,194.5" fill="#90c090"/>
<polygon points="197.0,194.0 188.2,198.2 190.1,204.7 198.8,200.5" fill="#90c090"/>
<polygon points="161.0,194.5 190.1,204.7 192.0,211.0 163.1,200.9" fill="#d08070"/>
<polygon points="198.8,200.5 190.1,204.7 192.0,211.0 200.6,206.8" fill="#d08070"/>
<polygon points="163.1,200.9 192.0,211.0 193.8,217.2 165.2,207.0" fill="#10c020"/>
<polygon points="200.6,206.8 192.0,211.0 193.8,217.2 202.3,213.0" fill="#10c020"/>
<polygon points="165.2,207.0 193.8,217.2 195.6,223.3 167.3,213.1" fill="#30a080"/>
<polygon points="202.3,213.0 193.8,217.2 195.6,223.3 204.0,219.1" fill="#30a080"/>
<polygon points="167.3,213.1 195.6,223.3 197.3,229.3 169.3,219.0" fill="#9070d0"/>
<polygon points="204.0,219.1 195.6,223.3 197.3,229.3 205.6,225.0" fill="#9070d0"/>
<polygon points="169.3,219.0 197.3,229.3 199.1,235.1 171.3,224.8" fill="#a050f0"/>
<polygon points="205.6,225.0 197.3,229.3 199.1,235.1 207.3,230.8" fill="#a050f0"/>
<polygon points="171.3,224.8 199.1,235.1 200.7,240.8 173.2,230.5" fill="#10d0c0"/>
<polygon points="207.3,230.8 199.1,235.1 200.7,240.8 208.8,236.5" fill="#10d0c0"/>
<polygon points="173.2,230.5 200.7,240.8 202.4,246.3 175.1,236.0" fill="#c02020"/>
<polygon points="208.8,236.5 200.7,240.8 202.4,246.3 210.4,242.1" fill="#c02020"/>
<polygon points="146.6,118.9 178.8,128.3 168.7,132.3 136.5,122.7" fill="#f0d880"/>
<polygon points="168.9,132.9 202.8,143.0 204.8,151.1 171.3,140.9" fill="#e01048"/>
<polygon points="212.8,138.8 202.8,143.0 204.8,151.1 214.6,146.8" fill="#e01048"/>
<polygon points="171.3,140.9 204.8,151.1 206.8,159.0 173.6,148.7" fill="#40a0b0"/>
<polygon points="214.6,146.8 204.8,151.1 206.8,159.0 216.4,154.7" fill="#40a0b0"/>
<polygon points="173.6,148.7 206.8,159.0 208.6,166.7 175.8,156.3" fill="#3050f0"/>
<polygon points="216.4,154.7 206.8,159.0 208.6,166.7 218.2,162.4" fill="#3050f0"/>
<polygon points="175.8,156.3 208.6,166.7 210.5,174.2 178.0,163.8" fill="#e0a050"/>
<polygon points="218.2,162.4 208.6,166.7 210.5,174.2 219.9,169.8" fill="#e0a050"/>
<polygon points="178.0,163.8 210.5,174.2 212.3,181.5 180.2,171.0" fill="#b060c0"/>
<polygon points="219.9,169.8 210.5,174.2 212.3,181.5 221.6,177.1" fill="#b060c0"/>
<polygon points="180.2,171.0 212.3,181.5 214.0,188.6 182.3,178.1" fill="#c0d090"/>
<polygon points="221.6,177.1 212.3,181.5 214.0,188.6 223.2,184.2" fill="#c0d090"/>
<polygon points="182.3,178.1 214.0,188.6 215.8,195.6 184.3,185.0" fill="#a0a030"/>
<polygon points="223.2,184.2 214.0,188.6 215.8,195.6 224.8,191.2" fill="#a0a030"/>
<polygon points="184.3,185.0 215.8,195.6 217.4,202.4 186.3,191.8" fill="#3060d0"/>
<polygon points="224.8,191.2 215.8,195.6 217.4,202.4 226.3,198.0" fill="#3060d0"/>
<polygon points="186.3,191.8 217.4,202.4 219.1,209.0 188.2,198.4" fill="#f03090"/>
<polygon points="226.3,198.0 217.4,202.4 219.1,209.0 227.8,204.6" fill="#f03090"/>
<polygon points="188.2,198.4 219.1,209.0 220.7,215.5 190.2,204.9" fill="#804080"/>
<polygon points="227.8,204.6 219.1,209.0 220.7,215.5 229.3,211.1" fill="#804080"/>
<polygon points="190.2,204.9 220.7,215.5 222.2,221.8 192.0,211.2" fill="#50e0a0"/>
<polygon points="229.3,211.1 220.7,215.5 222.2,221.8 230.8,217.4" fill="#50e0a0"/>
<polygon points="192.0,211.2 222.2,221.8 223.7,228.0 193.8,217.4" fill="#e060d0"/>
<polygon points="230.8,217.4 222.2,221.8 223.7,228.0 232.2,223.6" fill="#e060d0"/>
<polygon points="193.8,217.4 223.7,228.0 225.2,234.1 195.6,223.4" fill="#c08080"/>
<polygon points="232.2,223.6 223.7,228.0 225.2,234.1 233.6,229.7" fill="#c08080"/>
<polygon points="195.6,223.4 225.2,234.1 226.7,240.0 197.4,229.3" fill="#400838"/>
<polygon points="233.6,229.7 225.2,234.1 226.7,240.0 234.9,235.6" fill="#400838"/>
<polygon points="197.4,229.3 226.7,240.0 228.1,245.8 199.1,235.1" fill="#80d080"/>
<polygon points="234.9,235.6 226.7,240.0 228.1,245.8 236.2,241.4" fill="#80d080"/>
<polygon points="199.1,235.1 228.1,245.8 229.5,251.5 200.7,240.8" fill="#603060"/>
<polygon points="236.2,241.4 228.1,245.8 229.5,251.5 237.5,247.1" fill="#603060"/>
<polygon points="200.7,240.8 229.5,251.5 230.9,257.1 202.4,246.3" fill="#306020"/>
<polygon points="237.5,247.1 229.5,251.5 230.9,257.1 238.8,252.6" fill="#306020"/>
<polygon points="179.0,128.9 212.8,138.8 202.8,143.0 168.9,132.9" fill="#e01048"/>
<polygon points="202.6,142.1 238.4,152.8 240.0,161.0 204.6,150.3" fill="#9030b0"/>
<polygon points="248.3,148.3 238.4,152.8 240.0,161.0 249.7,156.5" fill="#9030b0"/>
<polygon points="204.6,150.3 240.0,161.0 241.6,169.0 206.6,158.2" fill="#e08090"/>
<polygon points="249.7,156.5 240.0,161.0 241.6,169.0 251.1,164.5" fill="#e08090"/>
<polygon points="206.6,158.2 241.6,169.0 243.1,176.8 208.5,166.0" fill="#a01050"/>
<polygon points="251.1,164.5 241.6,169.0 243.1,176.8 252.5,172.3" fill="#a01050"/>
<polygon points="208.5,166.0 243.1,176.8 244.5,184.5 210.3,173.6" fill="#8010f0"/>
<polygon points="252.5,172.3 243.1,176.8 244.5,184.5 253.8,179.9" fill="#8010f0"/>
<polygon points="210.3,173.6 244.5,184.5 246.0,191.9 212.2,180.9" fill="#30d030"/>
<polygon points="253.8,179.9 244.5,184.5 246.0,191.9 255.1,187.3" fill="#30d030"/>
<polygon points="212.2,180.9 246.0,191.9 247.3,199.1 213.9,188.1" fill="#70a0f0"/>
<polygon points="255.1,187.3 246.0,191.9 247.3,199.1 256.4,194.6" fill="#70a0f0"/>
<polygon points="213.9,188.1 247.3,199.1 248.7,206.2 215.7,195.1" fill="#c04060"/>
<polygon points="256.4,194.6 247.3,199.1 248.7,206.2 257.6,201.6" fill="#c04060"/>
<polygon points="215.7,195.1 248.7,206.2 250.0,213.1 217.3,202.0" fill="#80c0a0"/>
<polygon points="257.6,201.6 248.7,206.2 250.0,213.1 258.8,208.5" fill="#80c0a0"/>
<polygon points="217.3,202.0 250.0,213.1 251.3,219.8 219.0,208.7" fill="#3040e0"/>
<polygon points="258.8,208.5 250.0,213.1 251.3,219.8 260.0,215.2" fill="#3040e0"/>
<polygon points="219.0,208.7 251.3,219.8 252.6,226.4 220.6,215.2" fill="#206040"/>
<polygon points="260.0,215.2 251.3,219.8 252.6,226.4 261.1,221.7" fill="#206040"/>
<polygon points="220.6,215.2 252.6,226.4 253.8,232.8 222.2,221.6" fill="#f03010"/>
<polygon points="261.1,221.7 252.6,226.4 253.8,232.8 262.3,228.1" fill="#f03010"/>
<polygon points="222.2,221.6 253.8,232.8 255.0,239.0 223.7,227.9" fill="#30f0b0"/>
<polygon points="262.3,228.1 253.8,232.8 255.0,239.0 263.4,234.4" fill="#30f0b0"/>
<polygon points="223.7,227.9 255.0,239.0 256.2,245.1 225.2,234.0" fill="#c0b060"/>
<polygon points="263.4,234.4 255.0,239.0 256.2,245.1 264.4,240.5" fill="#c0b060"/>
<polygon points="225.2,234.0 256.2,245.1 257.3,251.1 226.7,239.9" fill="#d05070"/>
<polygon points="264.4,240.5 256.2,245.1 257.3,251.1 265.5,246.5" fill="#d05070"/>
<polygon points="226.7,239.9 257.3,251.1 258.5,257.0 228.1,245.8" fill="#b070f0"/>
<polygon points="265.5,246.5 257.3,251.1 258.5,257.0 266.5,252.3" fill="#b070f0"/>
<polygon points="228.1,245.8 258.5,257.0 259.6,262.7 229.5,251.5" fill="#f0b020"/>
<polygon points="266.5,252.3 258.5,257.0 259.6,262.7 267.5,258.0" fill="#f0b020"/>
<polygon points="229.5,251.5 259.6,262.7 260.6,268.3 230.9,257.1" fill="#10b0f0"/>
<polygon points="267.5,258.0 259.6,262.7 260.6,268.3 268.5,263.6" fill="#10b0f0"/>
<polygon points="212.6,137.9 248.3,148.3 238.4,152.8 202.6,142.1" fill="#9030b0"/>
<line x1="182.6" y1="35.2" x2="678.3" y2="143.6" stroke="#800080" stroke-width="1"/>
<line x1="20.1" y1="84.2" x2="562.3" y2="243.4" stroke="#800080" stroke-width="1"/>
<line x1="182.6" y1="35.2" x2="20.1" y2="84.2" stroke="#800080" stroke-width="1"/>
<line x1="678.3" y1="143.6" x2="562.3" y2="243.4" stroke="#800080" stroke-width="1"/>
<line x1="76.4" y1="198.8" x2="515.3" y2="364.2" stroke="#800080" stroke-width="1"/>
<line x1="616.7" y1="264.0" x2="515.3" y2="364.2" stroke="#800080" stroke-width="1"/>
<line x1="76.4" y1="198.8" x2="20.1" y2="84.2" stroke="#800080" stroke-width="1"/>
<line x1="515.3" y1="364.2" x2="562.3" y2="243.4" stroke="#800080" stroke-width="1"/>
<line x1="616.7" y1="264.0" x2="678.3" y2="143.6" stroke="#800080" stroke-width="1"/>
</svg><!--/scene-->

<!-- scrollbar -->
<div class="a" style="left:979px;top:160px;width:16px;height:444px;background:#f0f0f0"></div>
<svg class="a" style="left:979px;top:160px" width="16" height="444">
 <path d="M4.5 11 L8 7 L11.5 11 Z" fill="#a3a3a3"/>
 <rect x="2" y="17" width="13" height="116" fill="#c1c1c1"/>
 <path d="M4.5 433 L8 437 L11.5 433 Z" fill="#505050"/>
</svg>
<div id="tree" style="position:absolute;left:0;top:0;width:995px;height:604px;overflow:hidden"><svg width="0" height="0" style="position:absolute"><defs><linearGradient id="fg" x1="0" y1="0" x2="0" y2="1"><stop offset="0" stop-color="#fff7c8"/><stop offset="1" stop-color="#f2c95a"/></linearGradient></defs></svg>
<div class="a" style="left:730px;top:178px;width:249px;height:18px;background:#0a7fc2"></div>
<svg class="a" style="left:734px;top:166px" width="7" height="7"><path d="M6.5 0.5 V6.5 H0.5 Z" fill="#404040"/></svg>
<svg class="a" style="left:746px;top:163px" width="16" height="14"><path d="M0.5 2.2 Q0.5 0.8 1.8 0.8 H5.2 L6.6 2.2 H12.6 Q13.6 2.2 13.6 3.4 V11.8 H1.5 Q0.5 11.8 0.5 10.8 Z" fill="#f7dc8a" stroke="#c0902a"/><path d="M2.5 5.5 H14.5 Q15.5 5.5 15.3 6.5 L14 11.8 Q13.8 12.7 12.8 12.7 H1.5 Q0.5 12.7 0.7 11.8 L1.6 6.3 Q1.8 5.5 2.5 5.5 Z" fill="url(#fg)" stroke="#c0902a"/></svg>
<div class="a" style="left:764px;top:160px;font-size:12px;line-height:18px;color:#000;white-space:nowrap">解决方案</div>
<svg class="a" style="left:752px;top:182px" width="7" height="10"><path d="M1 1 L5.8 5 L1 9 Z" fill="none" stroke="#f0f0f0" stroke-width="1"/></svg>
<svg class="a" style="left:763px;top:181px" width="16" height="14"><defs></defs><path d="M0.5 2.2 Q0.5 0.8 1.8 0.8 H5.2 L6.6 2.2 H13.6 Q14.6 2.2 14.6 3.4 V11.8 Q14.6 12.7 13.6 12.7 H1.5 Q0.5 12.7 0.5 11.8 Z" fill="url(#fg)" stroke="#c0902a" stroke-width="1"/></svg>
<div class="a" style="left:780px;top:178px;font-size:12px;line-height:18px;color:#fff;white-space:nowrap">第1个车厢</div>
<svg class="a" style="left:752px;top:200px" width="7" height="10"><path d="M1 1 L5.8 5 L1 9 Z" fill="none" stroke="#a0a0a0" stroke-width="1"/></svg>
<svg class="a" style="left:763px;top:199px" width="16" height="14"><defs></defs><path d="M0.5 2.2 Q0.5 0.8 1.8 0.8 H5.2 L6.6 2.2 H13.6 Q14.6 2.2 14.6 3.4 V11.8 Q14.6 12.7 13.6 12.7 H1.5 Q0.5 12.7 0.5 11.8 Z" fill="url(#fg)" stroke="#c0902a" stroke-width="1"/></svg>
<div class="a" style="left:780px;top:196px;font-size:12px;line-height:18px;color:#000;white-space:nowrap">第2个车厢</div>
<svg class="a" style="left:752px;top:218px" width="7" height="10"><path d="M1 1 L5.8 5 L1 9 Z" fill="none" stroke="#a0a0a0" stroke-width="1"/></svg>
<svg class="a" style="left:763px;top:217px" width="16" height="14"><defs></defs><path d="M0.5 2.2 Q0.5 0.8 1.8 0.8 H5.2 L6.6 2.2 H13.6 Q14.6 2.2 14.6 3.4 V11.8 Q14.6 12.7 13.6 12.7 H1.5 Q0.5 12.7 0.5 11.8 Z" fill="url(#fg)" stroke="#c0902a" stroke-width="1"/></svg>
<div class="a" style="left:780px;top:214px;font-size:12px;line-height:18px;color:#000;white-space:nowrap">第3个车厢</div>
<svg class="a" style="left:752px;top:236px" width="7" height="10"><path d="M1 1 L5.8 5 L1 9 Z" fill="none" stroke="#a0a0a0" stroke-width="1"/></svg>
<svg class="a" style="left:763px;top:235px" width="16" height="14"><defs></defs><path d="M0.5 2.2 Q0.5 0.8 1.8 0.8 H5.2 L6.6 2.2 H13.6 Q14.6 2.2 14.6 3.4 V11.8 Q14.6 12.7 13.6 12.7 H1.5 Q0.5 12.7 0.5 11.8 Z" fill="url(#fg)" stroke="#c0902a" stroke-width="1"/></svg>
<div class="a" style="left:780px;top:232px;font-size:12px;line-height:18px;color:#000;white-space:nowrap">第4个车厢</div>
<svg class="a" style="left:752px;top:254px" width="7" height="10"><path d="M1 1 L5.8 5 L1 9 Z" fill="none" stroke="#a0a0a0" stroke-width="1"/></svg>
<svg class="a" style="left:763px;top:253px" width="16" height="14"><defs></defs><path d="M0.5 2.2 Q0.5 0.8 1.8 0.8 H5.2 L6.6 2.2 H13.6 Q14.6 2.2 14.6 3.4 V11.8 Q14.6 12.7 13.6 12.7 H1.5 Q0.5 12.7 0.5 11.8 Z" fill="url(#fg)" stroke="#c0902a" stroke-width="1"/></svg>
<div class="a" style="left:780px;top:250px;font-size:12px;line-height:18px;color:#000;white-space:nowrap">第5个车厢</div>
<svg class="a" style="left:750px;top:274px" width="7" height="7"><path d="M6.5 0.5 V6.5 H0.5 Z" fill="#404040"/></svg>
<svg class="a" style="left:762px;top:271px" width="16" height="14"><path d="M0.5 2.2 Q0.5 0.8 1.8 0.8 H5.2 L6.6 2.2 H12.6 Q13.6 2.2 13.6 3.4 V11.8 H1.5 Q0.5 11.8 0.5 10.8 Z" fill="#f7dc8a" stroke="#c0902a"/><path d="M2.5 5.5 H14.5 Q15.5 5.5 15.3 6.5 L14 11.8 Q13.8 12.7 12.8 12.7 H1.5 Q0.5 12.7 0.7 11.8 L1.6 6.3 Q1.8 5.5 2.5 5.5 Z" fill="url(#fg)" stroke="#c0902a"/></svg>
<div class="a" style="left:780px;top:268px;font-size:12px;line-height:18px;color:#000;white-space:nowrap">第6个车厢</div>
<svg class="a" style="left:768px;top:290px" width="7" height="10"><path d="M1 1 L5.8 5 L1 9 Z" fill="none" stroke="#a0a0a0" stroke-width="1"/></svg>
<svg class="a" style="left:779px;top:289px" width="16" height="14"><defs></defs><path d="M0.5 2.2 Q0.5 0.8 1.8 0.8 H5.2 L6.6 2.2 H13.6 Q14.6 2.2 14.6 3.4 V11.8 Q14.6 12.7 13.6 12.7 H1.5 Q0.5 12.7 0.5 11.8 Z" fill="url(#fg)" stroke="#c0902a" stroke-width="1"/></svg>
<div class="a" style="left:796px;top:286px;font-size:12px;line-height:18px;color:#000;white-space:nowrap">第1个物品</div>
<svg class="a" style="left:768px;top:308px" width="7" height="10"><path d="M1 1 L5.8 5 L1 9 Z" fill="none" stroke="#a0a0a0" stroke-width="1"/></svg>
<svg class="a" style="left:779px;top:307px" width="16" height="14"><defs></defs><path d="M0.5 2.2 Q0.5 0.8 1.8 0.8 H5.2 L6.6 2.2 H13.6 Q14.6 2.2 14.6 3.4 V11.8 Q14.6 12.7 13.6 12.7 H1.5 Q0.5 12.7 0.5 11.8 Z" fill="url(#fg)" stroke="#c0902a" stroke-width="1"/></svg>
<div class="a" style="left:796px;top:304px;font-size:12px;line-height:18px;color:#000;white-space:nowrap">第2个物品</div>
<svg class="a" style="left:768px;top:326px" width="7" height="10"><path d="M1 1 L5.8 5 L1 9 Z" fill="none" stroke="#a0a0a0" stroke-width="1"/></svg>
<svg class="a" style="left:779px;top:325px" width="16" height="14"><defs></defs><path d="M0.5 2.2 Q0.5 0.8 1.8 0.8 H5.2 L6.6 2.2 H13.6 Q14.6 2.2 14.6 3.4 V11.8 Q14.6 12.7 13.6 12.7 H1.5 Q0.5 12.7 0.5 11.8 Z" fill="url(#fg)" stroke="#c0902a" stroke-width="1"/></svg>
<div class="a" style="left:796px;top:322px;font-size:12px;line-height:18px;color:#000;white-space:nowrap">第3个物品</div>
<svg class="a" style="left:768px;top:344px" width="7" height="10"><path d="M1 1 L5.8 5 L1 9 Z" fill="none" stroke="#a0a0a0" stroke-width="1"/></svg>
<svg class="a" style="left:779px;top:343px" width="16" height="14"><defs></defs><path d="M0.5 2.2 Q0.5 0.8 1.8 0.8 H5.2 L6.6 2.2 H13.6 Q14.6 2.2 14.6 3.4 V11.8 Q14.6 12.7 13.6 12.7 H1.5 Q0.5 12.7 0.5 11.8 Z" fill="url(#fg)" stroke="#c0902a" stroke-width="1"/></svg>
<div class="a" style="left:796px;top:340px;font-size:12px;line-height:18px;color:#000;white-space:nowrap">第4个物品</div>
<svg class="a" style="left:768px;top:362px" width="7" height="10"><path d="M1 1 L5.8 5 L1 9 Z" fill="none" stroke="#a0a0a0" stroke-width="1"/></svg>
<svg class="a" style="left:779px;top:361px" width="16" height="14"><defs></defs><path d="M0.5 2.2 Q0.5 0.8 1.8 0.8 H5.2 L6.6 2.2 H13.6 Q14.6 2.2 14.6 3.4 V11.8 Q14.6 12.7 13.6 12.7 H1.5 Q0.5 12.7 0.5 11.8 Z" fill="url(#fg)" stroke="#c0902a" stroke-width="1"/></svg>
<div class="a" style="left:796px;top:358px;font-size:12px;line-height:18px;color:#000;white-space:nowrap">第5个物品</div>
<svg class="a" style="left:768px;top:380px" width="7" height="10"><path d="M1 1 L5.8 5 L1 9 Z" fill="none" stroke="#a0a0a0" stroke-width="1"/></svg>
<svg class="a" style="left:779px;top:379px" width="16" height="14"><defs></defs><path d="M0.5 2.2 Q0.5 0.8 1.8 0.8 H5.2 L6.6 2.2 H13.6 Q14.6 2.2 14.6 3.4 V11.8 Q14.6 12.7 13.6 12.7 H1.5 Q0.5 12.7 0.5 11.8 Z" fill="url(#fg)" stroke="#c0902a" stroke-width="1"/></svg>
<div class="a" style="left:796px;top:376px;font-size:12px;line-height:18px;color:#000;white-space:nowrap">第6个物品</div>
<svg class="a" style="left:768px;top:398px" width="7" height="10"><path d="M1 1 L5.8 5 L1 9 Z" fill="none" stroke="#a0a0a0" stroke-width="1"/></svg>
<svg class="a" style="left:779px;top:397px" width="16" height="14"><defs></defs><path d="M0.5 2.2 Q0.5 0.8 1.8 0.8 H5.2 L6.6 2.2 H13.6 Q14.6 2.2 14.6 3.4 V11.8 Q14.6 12.7 13.6 12.7 H1.5 Q0.5 12.7 0.5 11.8 Z" fill="url(#fg)" stroke="#c0902a" stroke-width="1"/></svg>
<div class="a" style="left:796px;top:394px;font-size:12px;line-height:18px;color:#000;white-space:nowrap">第7个物品</div>
<svg class="a" style="left:768px;top:416px" width="7" height="10"><path d="M1 1 L5.8 5 L1 9 Z" fill="none" stroke="#a0a0a0" stroke-width="1"/></svg>
<svg class="a" style="left:779px;top:415px" width="16" height="14"><defs></defs><path d="M0.5 2.2 Q0.5 0.8 1.8 0.8 H5.2 L6.6 2.2 H13.6 Q14.6 2.2 14.6 3.4 V11.8 Q14.6 12.7 13.6 12.7 H1.5 Q0.5 12.7 0.5 11.8 Z" fill="url(#fg)" stroke="#c0902a" stroke-width="1"/></svg>
<div class="a" style="left:796px;top:412px;font-size:12px;line-height:18px;color:#000;white-space:nowrap">第8个物品</div>
<svg class="a" style="left:768px;top:434px" width="7" height="10"><path d="M1 1 L5.8 5 L1 9 Z" fill="none" stroke="#a0a0a0" stroke-width="1"/></svg>
<svg class="a" style="left:779px;top:433px" width="16" height="14"><defs></defs><path d="M0.5 2.2 Q0.5 0.8 1.8 0.8 H5.2 L6.6 2.2 H13.6 Q14.6 2.2 14.6 3.4 V11.8 Q14.6 12.7 13.6 12.7 H1.5 Q0.5 12.7 0.5 11.8 Z" fill="url(#fg)" stroke="#c0902a" stroke-width="1"/></svg>
<div class="a" style="left:796px;top:430px;font-size:12px;line-height:18px;color:#000;white-space:nowrap">第9个物品</div>
<svg class="a" style="left:768px;top:452px" width="7" height="10"><path d="M1 1 L5.8 5 L1 9 Z" fill="none" stroke="#a0a0a0" stroke-width="1"/></svg>
<svg class="a" style="left:779px;top:451px" width="16" height="14"><defs></defs><path d="M0.5 2.2 Q0.5 0.8 1.8 0.8 H5.2 L6.6 2.2 H13.6 Q14.6 2.2 14.6 3.4 V11.8 Q14.6 12.7 13.6 12.7 H1.5 Q0.5 12.7 0.5 11.8 Z" fill="url(#fg)" stroke="#c0902a" stroke-width="1"/></svg>
<div class="a" style="left:796px;top:448px;font-size:12px;line-height:18px;color:#000;white-space:nowrap">第10个物品</div>
<svg class="a" style="left:768px;top:470px" width="7" height="10"><path d="M1 1 L5.8 5 L1 9 Z" fill="none" stroke="#a0a0a0" stroke-width="1"/></svg>
<svg class="a" style="left:779px;top:469px" width="16" height="14"><defs></defs><path d="M0.5 2.2 Q0.5 0.8 1.8 0.8 H5.2 L6.6 2.2 H13.6 Q14.6 2.2 14.6 3.4 V11.8 Q14.6 12.7 13.6 12.7 H1.5 Q0.5 12.7 0.5 11.8 Z" fill="url(#fg)" stroke="#c0902a" stroke-width="1"/></svg>
<div class="a" style="left:796px;top:466px;font-size:12px;line-height:18px;color:#000;white-space:nowrap">第11个物品</div>
<svg class="a" style="left:768px;top:488px" width="7" height="10"><path d="M1 1 L5.8 5 L1 9 Z" fill="none" stroke="#a0a0a0" stroke-width="1"/></svg>
<svg class="a" style="left:779px;top:487px" width="16" height="14"><defs></defs><path d="M0.5 2.2 Q0.5 0.8 1.8 0.8 H5.2 L6.6 2.2 H13.6 Q14.6 2.2 14.6 3.4 V11.8 Q14.6 12.7 13.6 12.7 H1.5 Q0.5 12.7 0.5 11.8 Z" fill="url(#fg)" stroke="#c0902a" stroke-width="1"/></svg>
<div class="a" style="left:796px;top:484px;font-size:12px;line-height:18px;color:#000;white-space:nowrap">第12个物品</div>
<svg class="a" style="left:768px;top:506px" width="7" height="10"><path d="M1 1 L5.8 5 L1 9 Z" fill="none" stroke="#a0a0a0" stroke-width="1"/></svg>
<svg class="a" style="left:779px;top:505px" width="16" height="14"><defs></defs><path d="M0.5 2.2 Q0.5 0.8 1.8 0.8 H5.2 L6.6 2.2 H13.6 Q14.6 2.2 14.6 3.4 V11.8 Q14.6 12.7 13.6 12.7 H1.5 Q0.5 12.7 0.5 11.8 Z" fill="url(#fg)" stroke="#c0902a" stroke-width="1"/></svg>
<div class="a" style="left:796px;top:502px;font-size:12px;line-height:18px;color:#000;white-space:nowrap">第13个物品</div>
<svg class="a" style="left:768px;top:524px" width="7" height="10"><path d="M1 1 L5.8 5 L1 9 Z" fill="none" stroke="#a0a0a0" stroke-width="1"/></svg>
<svg class="a" style="left:779px;top:523px" width="16" height="14"><defs></defs><path d="M0.5 2.2 Q0.5 0.8 1.8 0.8 H5.2 L6.6 2.2 H13.6 Q14.6 2.2 14.6 3.4 V11.8 Q14.6 12.7 13.6 12.7 H1.5 Q0.5 12.7 0.5 11.8 Z" fill="url(#fg)" stroke="#c0902a" stroke-width="1"/></svg>
<div class="a" style="left:796px;top:520px;font-size:12px;line-height:18px;color:#000;white-space:nowrap">第14个物品</div>
<svg class="a" style="left:768px;top:542px" width="7" height="10"><path d="M1 1 L5.8 5 L1 9 Z" fill="none" stroke="#a0a0a0" stroke-width="1"/></svg>
<svg class="a" style="left:779px;top:541px" width="16" height="14"><defs></defs><path d="M0.5 2.2 Q0.5 0.8 1.8 0.8 H5.2 L6.6 2.2 H13.6 Q14.6 2.2 14.6 3.4 V11.8 Q14.6 12.7 13.6 12.7 H1.5 Q0.5 12.7 0.5 11.8 Z" fill="url(#fg)" stroke="#c0902a" stroke-width="1"/></svg>
<div class="a" style="left:796px;top:538px;font-size:12px;line-height:18px;color:#000;white-space:nowrap">第15个物品</div>
<svg class="a" style="left:768px;top:560px" width="7" height="10"><path d="M1 1 L5.8 5 L1 9 Z" fill="none" stroke="#a0a0a0" stroke-width="1"/></svg>
<svg class="a" style="left:779px;top:559px" width="16" height="14"><defs></defs><path d="M0.5 2.2 Q0.5 0.8 1.8 0.8 H5.2 L6.6 2.2 H13.6 Q14.6 2.2 14.6 3.4 V11.8 Q14.6 12.7 13.6 12.7 H1.5 Q0.5 12.7 0.5 11.8 Z" fill="url(#fg)" stroke="#c0902a" stroke-width="1"/></svg>
<div class="a" style="left:796px;top:556px;font-size:12px;line-height:18px;color:#000;white-space:nowrap">第16个物品</div>
<svg class="a" style="left:768px;top:578px" width="7" height="10"><path d="M1 1 L5.8 5 L1 9 Z" fill="none" stroke="#a0a0a0" stroke-width="1"/></svg>
<svg class="a" style="left:779px;top:577px" width="16" height="14"><defs></defs><path d="M0.5 2.2 Q0.5 0.8 1.8 0.8 H5.2 L6.6 2.2 H13.6 Q14.6 2.2 14.6 3.4 V11.8 Q14.6 12.7 13.6 12.7 H1.5 Q0.5 12.7 0.5 11.8 Z" fill="url(#fg)" stroke="#c0902a" stroke-width="1"/></svg>
<div class="a" style="left:796px;top:574px;font-size:12px;line-height:18px;color:#000;white-space:nowrap">第17个物品</div>
<svg class="a" style="left:768px;top:596px" width="7" height="10"><path d="M1 1 L5.8 5 L1 9 Z" fill="none" stroke="#a0a0a0" stroke-width="1"/></svg>
<svg class="a" style="left:779px;top:595px" width="16" height="14"><defs></defs><path d="M0.5 2.2 Q0.5 0.8 1.8 0.8 H5.2 L6.6 2.2 H13.6 Q14.6 2.2 14.6 3.4 V11.8 Q14.6 12.7 13.6 12.7 H1.5 Q0.5 12.7 0.5 11.8 Z" fill="url(#fg)" stroke="#c0902a" stroke-width="1"/></svg>
<div class="a" style="left:796px;top:592px;font-size:12px;line-height:18px;color:#000;white-space:nowrap">第18个物品</div></div><!--/tree-->
<div class="a" style="left:5px;top:604px;width:990px;height:1px;background:#d8d8d8"></div>
<div class="a" style="left:5px;top:605px;width:990px;height:1px;background:#ece6e0"></div>
<div class="a" style="left:4px;top:606px;width:991px;height:1px;background:#1e7fd8"></div>
</body></html>
